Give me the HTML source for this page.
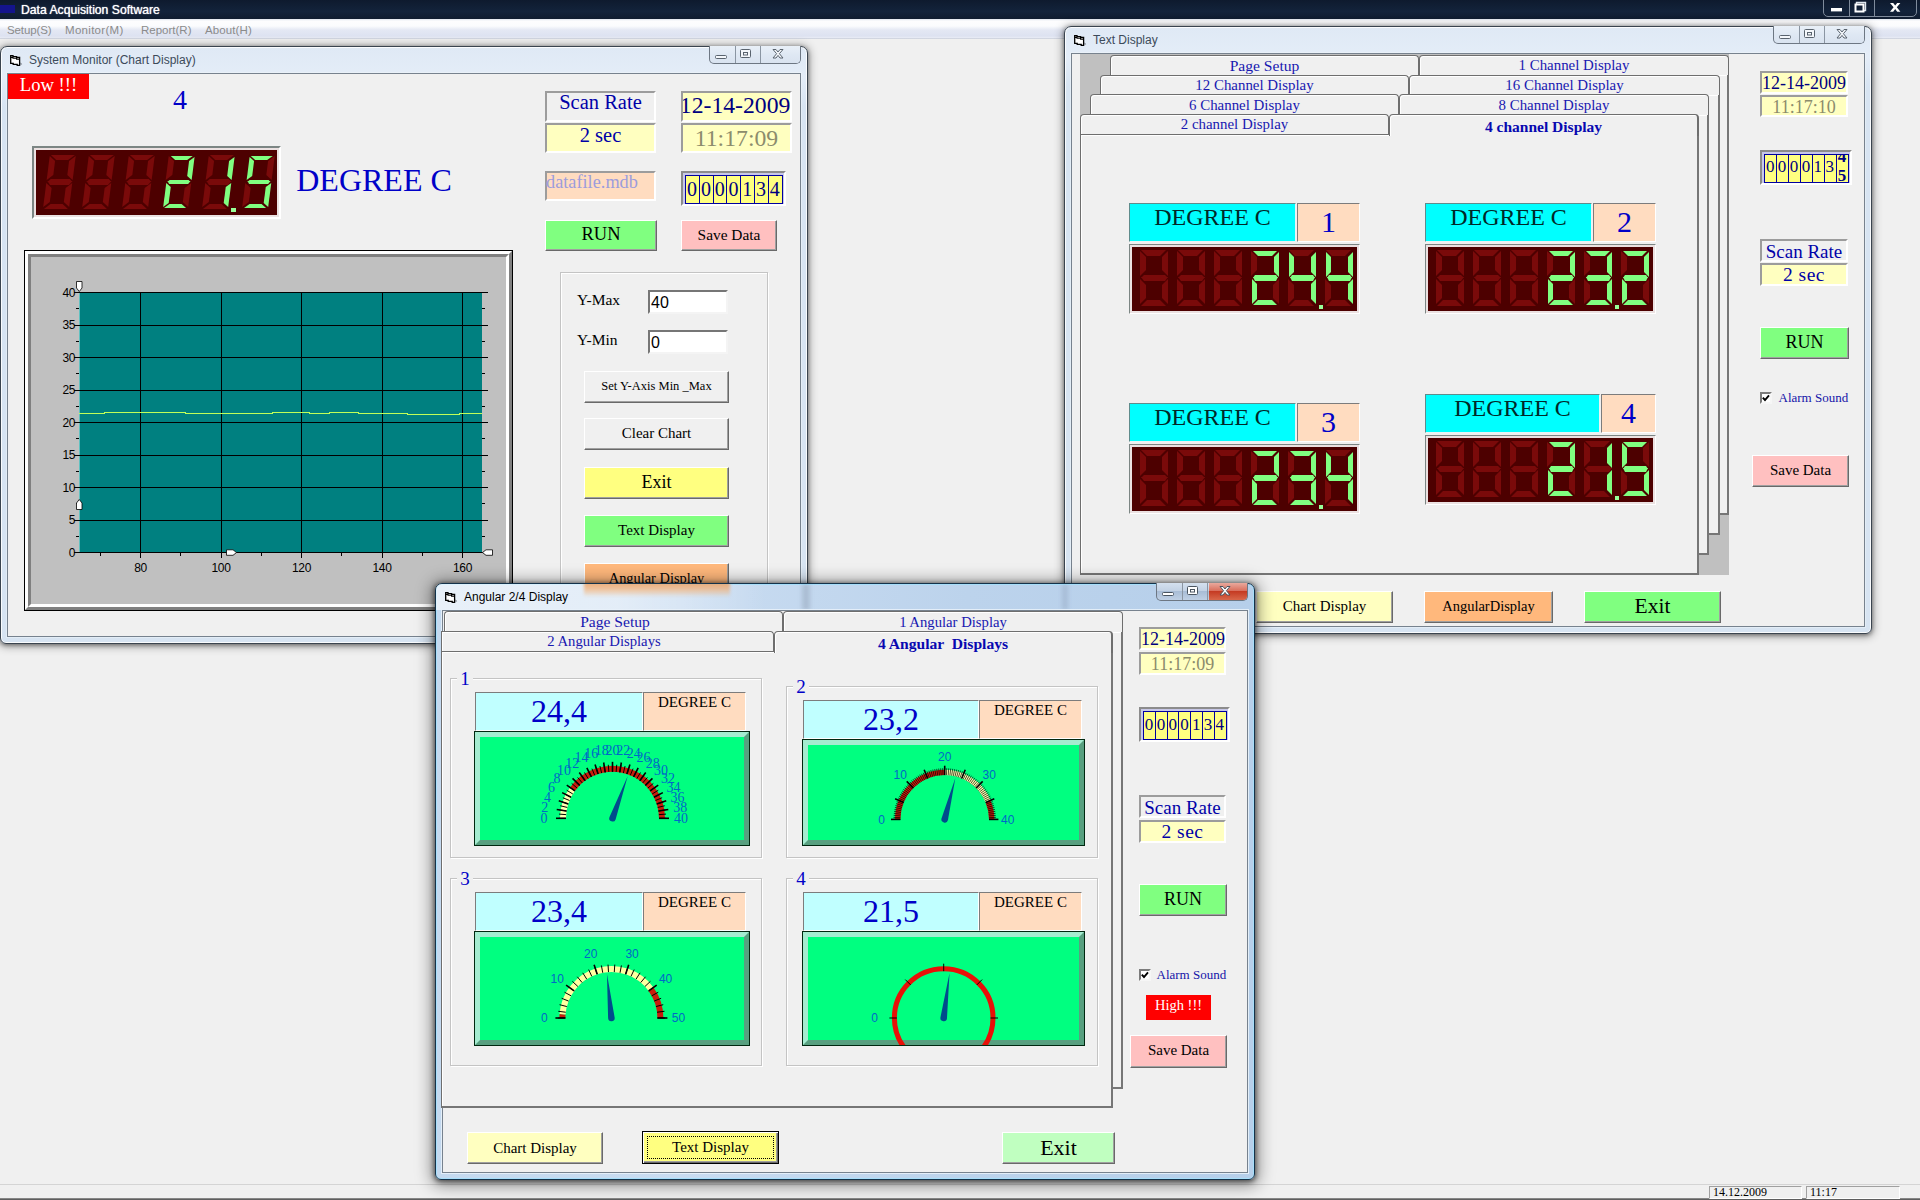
<!DOCTYPE html>
<html lang="en"><head><meta charset="utf-8"><title>Data Acquisition Software</title>
<style>
html,body{margin:0;padding:0}
body{width:1920px;height:1200px;overflow:hidden;background:#f0f0f0;position:relative;font-family:"Liberation Sans",sans-serif}
div,svg,i{position:absolute;box-sizing:border-box}
i{display:block;width:0;height:0;box-sizing:content-box}
.f-s{font-family:"Liberation Serif",serif}
.f-a{font-family:"Liberation Sans",sans-serif}
.tc{text-align:center;white-space:nowrap}
.tl{text-align:left;white-space:nowrap}
.tr{text-align:right;white-space:nowrap}
.dg{overflow:visible}
.win{overflow:hidden}
</style></head>
<body>
<div style="left:0px;top:0px;width:1920px;height:19px;background:linear-gradient(180deg,#0e1a2e 0,#13233b 60%,#0f1c30 100%);"></div>
<div style="left:0px;top:5px;width:15px;height:8px;background:#14148c;"></div>
<div class="f-a tl" style="left:21px;top:1px;width:379px;height:19px;font-size:12.2px;color:#fff;line-height:19px;text-shadow:0 0 1px #fff;">Data Acquisition Software</div>
<div style="left:1823px;top:-1px;width:94px;height:18px;border:1px solid #7f8b9c;border-radius:0 0 5px 5px;"><div style="left:25px;top:0;width:1px;height:16px;background:#7f8b9c"></div><div style="left:50px;top:0;width:1px;height:16px;background:#7f8b9c"></div><svg width="94" height="17" viewBox="0 0 94 17" style="left:-1px;top:0"><rect x="8" y="8" width="11" height="3.4" fill="#fff"/><path d="M33.5 4.5v-2h9v8h-2" fill="none" stroke="#dfe6ee" stroke-width="1.4"/><rect x="32.5" y="4.5" width="8" height="7" fill="none" stroke="#fff" stroke-width="2"/><path d="M67 3h3.2l2 2.6 2-2.6h3.2l-3.6 4.3 3.6 4.4h-3.2l-2-2.7-2 2.7h-3.2l3.6-4.4z" fill="#fff"/></svg></div>
<div style="left:0px;top:19px;width:1920px;height:20px;background:linear-gradient(180deg,#dfe5ee 0,#fdfdfe 2px,#fbfcfe 7px,#e4e8f4 11px,#dde2f1 17px,#e9ecf5 19px,#b9bfcc 20px);"></div>
<div class="f-a tl" style="left:7px;top:21px;width:80px;height:18px;font-size:11.5px;color:#8b8b8b;line-height:18px;letter-spacing:-0.1px;">Setup(S)</div>
<div class="f-a tl" style="left:65px;top:21px;width:80px;height:18px;font-size:11.5px;color:#8b8b8b;line-height:18px;letter-spacing:0.3px;">Monitor(M)</div>
<div class="f-a tl" style="left:141px;top:21px;width:80px;height:18px;font-size:11.5px;color:#8b8b8b;line-height:18px;letter-spacing:0px;">Report(R)</div>
<div class="f-a tl" style="left:205px;top:21px;width:80px;height:18px;font-size:11.5px;color:#8b8b8b;line-height:18px;letter-spacing:0.1px;">About(H)</div>
<div style="left:0px;top:1184px;width:1920px;height:16px;background:#f0f0f0;border-top:1px solid #d4d4d4;"></div>
<div style="left:0px;top:1198px;width:1920px;height:2px;background:linear-gradient(180deg,#9a9a9a,#4a4a4a);"></div>
<div style="left:1709px;top:1186px;width:93px;height:13px;border:1px solid;border-color:#a0a0a0 #fff #fff #a0a0a0;"></div>
<div style="left:1806px;top:1186px;width:94px;height:13px;border:1px solid;border-color:#a0a0a0 #fff #fff #a0a0a0;"></div>
<div class="f-s tl" style="left:1713px;top:1185px;width:87px;height:14px;font-size:12px;color:#000;line-height:14px;">14.12.2009</div>
<div class="f-s tl" style="left:1810px;top:1185px;width:88px;height:14px;font-size:12px;color:#000;line-height:14px;">11:17</div>
<div class="win" style="left:0px;top:46px;width:808px;height:598px;background:linear-gradient(180deg,#dfe9f5 0px,#e4edf8 30px,#d7e4f2 60px,#d7e4f2 100%);border:1px solid #3a444f;border-radius:7px 7px 6px 6px;box-shadow:0 1px 4px 0 rgba(0,0,0,.45),0 1px 9px 2px rgba(0,0,0,.3), inset 0 0 0 1px rgba(255,255,255,.85);"></div>
<svg class="ico" width="13" height="12" viewBox="0 0 13 12" style="left:10px;top:55px"><path d="M.7.7H3v.9h3.6v.9h3v7.8H7.2v-.9h-4v-1H.7z" fill="#fff" stroke="#000" stroke-width="1.3"/><path d="M.7 2.4H3v.9h3.6v.9h3" fill="none" stroke="#000" stroke-width="1.1"/><path d="M10.3 7.2l1.9 2-1.9.5z" fill="#6a7078"/></svg>
<div class="f-a tl" style="left:29px;top:49px;width:371px;height:22px;font-size:12px;color:#3c4a5a;line-height:22px;">System Monitor (Chart Display)</div>
<div class="client" style="left:7px;top:73px;width:794px;height:564px;background:#f0f0f0;border:1px solid #77828e;box-shadow:0 0 0 1px rgba(240,245,250,.5);"></div>
<div class="capb" style="left:709px;top:46px;width:92px;height:18px;border:1px solid #6d7783;border-top:none;border-radius:0 0 5px 5px;background:linear-gradient(180deg,#e9f0f8 0,#dfe8f3 50%,#d9e3f0 100%);overflow:hidden;"><div style="left:0;top:0;width:26px;height:17px;border-right:1px solid #8a95a2"></div><div style="left:27px;top:0;width:24px;height:17px;border-right:1px solid #8a95a2"></div><div style="left:52px;top:0;width:39px;height:17px;background:linear-gradient(180deg,#e9f0f8 0,#dfe8f3 50%,#d9e3f0 100%)"></div><svg width="92" height="17" viewBox="0 0 92 17" style="left:-4px;top:-1px"><rect x="9.5" y="10.5" width="11" height="3" rx="1" fill="#f4f7fb" stroke="#59636e"/><rect x="34.5" y="4.5" width="10" height="8" rx="1" fill="#f4f7fb" stroke="#59636e"/><rect x="37.5" y="7.5" width="4" height="2.5" fill="none" stroke="#59636e"/><path d="M67 4.5h3l2 2.5 2-2.5h3l-3.6 4.2 3.6 4.3h-3l-2-2.6-2 2.6h-3l3.6-4.3z" fill="#f4f7fb" stroke="#59636e" stroke-width="1"/></svg></div>
<div class="f-s tc" style="left:8px;top:74px;width:81px;height:24.5px;font-size:18.6px;color:#fff;line-height:24.5px;background:#ff0000;line-height:21px;">Low !!!</div>
<div class="f-s tc" style="left:160px;top:84px;width:40px;height:32px;font-size:28px;color:#0000c8;line-height:32px;">4</div>
<div class="led" aria-label="21.5" style="left:32px;top:146px;width:249px;height:73px;border:2px solid;border-color:#7c8684 #fff #fff #7c8684;"><div style="left:0;top:0;right:0;bottom:0;background:#4d0000;border:2px solid #ebe1e1;overflow:hidden;"><div class="dg" style="left:7.5px;top:5.7px;width:25.5px;height:52.5px;transform:skewX(-7.3deg);transform-origin:0 100%;"><i style="left:0.45px;top:-0.6px;width:11.2px;border-top:5.6px solid #7a0a0a;border-left:6.7px solid transparent;border-right:6.7px solid transparent;"></i><i style="left:0.45px;top:47.5px;width:11.2px;border-bottom:5.6px solid #7a0a0a;border-left:6.7px solid transparent;border-right:6.7px solid transparent;"></i><i style="left:0.45px;top:23.25px;width:18.6px;border-bottom:3px solid #7a0a0a;border-left:3px solid transparent;border-right:3px solid transparent;"></i><i style="left:0.45px;top:25.25px;width:18.6px;border-top:4px solid #7a0a0a;border-left:3px solid transparent;border-right:3px solid transparent;"></i><i style="left:-0.6px;top:0.45px;height:13.55px;border-left:6.7px solid #7a0a0a;border-top:5.6px solid transparent;border-bottom:5.6px solid transparent;"></i><i style="left:19.4px;top:0.45px;height:13.55px;border-right:6.7px solid #7a0a0a;border-top:5.6px solid transparent;border-bottom:5.6px solid transparent;"></i><i style="left:-0.6px;top:27.3px;height:13.55px;border-left:6.7px solid #7a0a0a;border-top:5.6px solid transparent;border-bottom:5.6px solid transparent;"></i><i style="left:19.4px;top:27.3px;height:13.55px;border-right:6.7px solid #7a0a0a;border-top:5.6px solid transparent;border-bottom:5.6px solid transparent;"></i></div><div class="dg" style="left:47.3px;top:5.7px;width:25.5px;height:52.5px;transform:skewX(-7.3deg);transform-origin:0 100%;"><i style="left:0.45px;top:-0.6px;width:11.2px;border-top:5.6px solid #7a0a0a;border-left:6.7px solid transparent;border-right:6.7px solid transparent;"></i><i style="left:0.45px;top:47.5px;width:11.2px;border-bottom:5.6px solid #7a0a0a;border-left:6.7px solid transparent;border-right:6.7px solid transparent;"></i><i style="left:0.45px;top:23.25px;width:18.6px;border-bottom:3px solid #7a0a0a;border-left:3px solid transparent;border-right:3px solid transparent;"></i><i style="left:0.45px;top:25.25px;width:18.6px;border-top:4px solid #7a0a0a;border-left:3px solid transparent;border-right:3px solid transparent;"></i><i style="left:-0.6px;top:0.45px;height:13.55px;border-left:6.7px solid #7a0a0a;border-top:5.6px solid transparent;border-bottom:5.6px solid transparent;"></i><i style="left:19.4px;top:0.45px;height:13.55px;border-right:6.7px solid #7a0a0a;border-top:5.6px solid transparent;border-bottom:5.6px solid transparent;"></i><i style="left:-0.6px;top:27.3px;height:13.55px;border-left:6.7px solid #7a0a0a;border-top:5.6px solid transparent;border-bottom:5.6px solid transparent;"></i><i style="left:19.4px;top:27.3px;height:13.55px;border-right:6.7px solid #7a0a0a;border-top:5.6px solid transparent;border-bottom:5.6px solid transparent;"></i></div><div class="dg" style="left:87.1px;top:5.7px;width:25.5px;height:52.5px;transform:skewX(-7.3deg);transform-origin:0 100%;"><i style="left:0.45px;top:-0.6px;width:11.2px;border-top:5.6px solid #7a0a0a;border-left:6.7px solid transparent;border-right:6.7px solid transparent;"></i><i style="left:0.45px;top:47.5px;width:11.2px;border-bottom:5.6px solid #7a0a0a;border-left:6.7px solid transparent;border-right:6.7px solid transparent;"></i><i style="left:0.45px;top:23.25px;width:18.6px;border-bottom:3px solid #7a0a0a;border-left:3px solid transparent;border-right:3px solid transparent;"></i><i style="left:0.45px;top:25.25px;width:18.6px;border-top:4px solid #7a0a0a;border-left:3px solid transparent;border-right:3px solid transparent;"></i><i style="left:-0.6px;top:0.45px;height:13.55px;border-left:6.7px solid #7a0a0a;border-top:5.6px solid transparent;border-bottom:5.6px solid transparent;"></i><i style="left:19.4px;top:0.45px;height:13.55px;border-right:6.7px solid #7a0a0a;border-top:5.6px solid transparent;border-bottom:5.6px solid transparent;"></i><i style="left:-0.6px;top:27.3px;height:13.55px;border-left:6.7px solid #7a0a0a;border-top:5.6px solid transparent;border-bottom:5.6px solid transparent;"></i><i style="left:19.4px;top:27.3px;height:13.55px;border-right:6.7px solid #7a0a0a;border-top:5.6px solid transparent;border-bottom:5.6px solid transparent;"></i></div><div class="dg" style="left:126.9px;top:5.7px;width:25.5px;height:52.5px;transform:skewX(-7.3deg);transform-origin:0 100%;"><i style="left:-0.6px;top:0.45px;height:13.55px;border-left:6.7px solid #7a0a0a;border-top:5.6px solid transparent;border-bottom:5.6px solid transparent;"></i><i style="left:19.4px;top:27.3px;height:13.55px;border-right:6.7px solid #7a0a0a;border-top:5.6px solid transparent;border-bottom:5.6px solid transparent;"></i><i style="left:1.05px;top:0px;width:12.4px;border-top:4.4px solid #80ff80;border-left:5.5px solid transparent;border-right:5.5px solid transparent;"></i><i style="left:1.05px;top:48.1px;width:12.4px;border-bottom:4.4px solid #80ff80;border-left:5.5px solid transparent;border-right:5.5px solid transparent;"></i><i style="left:1.05px;top:24.25px;width:19.4px;border-bottom:2px solid #80ff80;border-left:2px solid transparent;border-right:2px solid transparent;"></i><i style="left:1.05px;top:25.25px;width:19.4px;border-top:3px solid #80ff80;border-left:2px solid transparent;border-right:2px solid transparent;"></i><i style="left:20px;top:1.05px;height:15.35px;border-right:5.5px solid #80ff80;border-top:4.4px solid transparent;border-bottom:4.4px solid transparent;"></i><i style="left:0px;top:27.3px;height:15.35px;border-left:5.5px solid #80ff80;border-top:4.4px solid transparent;border-bottom:4.4px solid transparent;"></i></div><div class="dg" style="left:166.7px;top:5.7px;width:25.5px;height:52.5px;transform:skewX(-7.3deg);transform-origin:0 100%;"><i style="left:0.45px;top:-0.6px;width:11.2px;border-top:5.6px solid #7a0a0a;border-left:6.7px solid transparent;border-right:6.7px solid transparent;"></i><i style="left:0.45px;top:47.5px;width:11.2px;border-bottom:5.6px solid #7a0a0a;border-left:6.7px solid transparent;border-right:6.7px solid transparent;"></i><i style="left:0.45px;top:23.25px;width:18.6px;border-bottom:3px solid #7a0a0a;border-left:3px solid transparent;border-right:3px solid transparent;"></i><i style="left:0.45px;top:25.25px;width:18.6px;border-top:4px solid #7a0a0a;border-left:3px solid transparent;border-right:3px solid transparent;"></i><i style="left:-0.6px;top:0.45px;height:13.55px;border-left:6.7px solid #7a0a0a;border-top:5.6px solid transparent;border-bottom:5.6px solid transparent;"></i><i style="left:-0.6px;top:27.3px;height:13.55px;border-left:6.7px solid #7a0a0a;border-top:5.6px solid transparent;border-bottom:5.6px solid transparent;"></i><i style="left:20px;top:1.05px;height:15.35px;border-right:5.5px solid #80ff80;border-top:4.4px solid transparent;border-bottom:4.4px solid transparent;"></i><i style="left:20px;top:27.3px;height:15.35px;border-right:5.5px solid #80ff80;border-top:4.4px solid transparent;border-bottom:4.4px solid transparent;"></i></div><div class="dg" style="left:206.5px;top:5.7px;width:25.5px;height:52.5px;transform:skewX(-7.3deg);transform-origin:0 100%;"><i style="left:19.4px;top:0.45px;height:13.55px;border-right:6.7px solid #7a0a0a;border-top:5.6px solid transparent;border-bottom:5.6px solid transparent;"></i><i style="left:-0.6px;top:27.3px;height:13.55px;border-left:6.7px solid #7a0a0a;border-top:5.6px solid transparent;border-bottom:5.6px solid transparent;"></i><i style="left:1.05px;top:0px;width:12.4px;border-top:4.4px solid #80ff80;border-left:5.5px solid transparent;border-right:5.5px solid transparent;"></i><i style="left:1.05px;top:48.1px;width:12.4px;border-bottom:4.4px solid #80ff80;border-left:5.5px solid transparent;border-right:5.5px solid transparent;"></i><i style="left:1.05px;top:24.25px;width:19.4px;border-bottom:2px solid #80ff80;border-left:2px solid transparent;border-right:2px solid transparent;"></i><i style="left:1.05px;top:25.25px;width:19.4px;border-top:3px solid #80ff80;border-left:2px solid transparent;border-right:2px solid transparent;"></i><i style="left:0px;top:1.05px;height:15.35px;border-left:5.5px solid #80ff80;border-top:4.4px solid transparent;border-bottom:4.4px solid transparent;"></i><i style="left:20px;top:27.3px;height:15.35px;border-right:5.5px solid #80ff80;border-top:4.4px solid transparent;border-bottom:4.4px solid transparent;"></i></div><div style="left:195.05px;top:57.7px;width:4.6px;height:4px;background:#98ff98"></div></div></div>
<div class="f-s tc" style="left:288px;top:160px;width:172px;height:40px;font-size:32px;color:#0000c8;line-height:40px;">DEGREE C</div>
<div class="f-s tc" style="left:545px;top:91px;width:111px;height:31px;background:#f0f0f0;border:2px solid;border-color:#9c9c9c #fff #fff #9c9c9c;font-size:20.5px;color:#0000a8;line-height:27px;"><span style="position:relative;top:-4px">Scan Rate</span></div>
<div class="f-s tc" style="left:545px;top:123px;width:111px;height:30px;background:#ffffc0;border:2px solid;border-color:#9c9c9c #fff #fff #9c9c9c;font-size:20.5px;color:#0000a8;line-height:26px;"><span style="position:relative;top:-3px">2 sec</span></div>
<div class="f-s tl" style="left:681px;top:91px;width:111px;height:31px;background:#ffffc0;border:2px solid;border-color:#9c9c9c #fff #fff #9c9c9c;font-size:23.7px;color:#000080;line-height:27px;overflow:hidden;text-indent:-3.2px;"><span style="position:relative;top:-1px">12-14-2009</span></div>
<div class="f-s tc" style="left:681px;top:123px;width:111px;height:30px;background:#ffffc0;border:2px solid;border-color:#9c9c9c #fff #fff #9c9c9c;font-size:23.7px;color:#8c8c6c;line-height:26px;">11:17:09</div>
<div class="f-s tl" style="left:545px;top:171px;width:111px;height:30px;background:#ffdcc0;border:2px solid;border-color:#9c9c9c #fff #fff #9c9c9c;font-size:18.3px;color:#9c9cdc;line-height:26px;text-indent:-1px;"><span style="position:relative;top:-4px">datafile.mdb</span></div>
<div style="left:681px;top:171px;width:105px;height:35px;background:#c8c8e8;border:2px solid;border-color:#8c8c8c #fff #fff #8c8c8c;"></div>
<div style="left:685px;top:174.5px;width:97.5px;height:29.5px;background:#ffff80;border:1px solid #0000a0;"></div>
<div class="f-s tc" style="left:684.7px;top:174.5px;width:14.79px;height:29.5px;font-size:20px;color:#000080;line-height:29.5px;">0</div>
<div style="left:698.79px;top:174.5px;width:1px;height:29.5px;background:#0000a0;"></div>
<div class="f-s tc" style="left:698.49px;top:174.5px;width:14.79px;height:29.5px;font-size:20px;color:#000080;line-height:29.5px;">0</div>
<div style="left:712.57px;top:174.5px;width:1px;height:29.5px;background:#0000a0;"></div>
<div class="f-s tc" style="left:712.27px;top:174.5px;width:14.79px;height:29.5px;font-size:20px;color:#000080;line-height:29.5px;">0</div>
<div style="left:726.36px;top:174.5px;width:1px;height:29.5px;background:#0000a0;"></div>
<div class="f-s tc" style="left:726.06px;top:174.5px;width:14.79px;height:29.5px;font-size:20px;color:#000080;line-height:29.5px;">0</div>
<div style="left:740.14px;top:174.5px;width:1px;height:29.5px;background:#0000a0;"></div>
<div class="f-s tc" style="left:739.84px;top:174.5px;width:14.79px;height:29.5px;font-size:20px;color:#000080;line-height:29.5px;">1</div>
<div style="left:753.93px;top:174.5px;width:1px;height:29.5px;background:#0000a0;"></div>
<div class="f-s tc" style="left:753.63px;top:174.5px;width:14.79px;height:29.5px;font-size:20px;color:#000080;line-height:29.5px;">3</div>
<div style="left:767.71px;top:174.5px;width:1px;height:29.5px;background:#0000a0;"></div>
<div class="f-s tc" style="left:767.41px;top:174.5px;width:14.79px;height:29.5px;font-size:20px;color:#000080;line-height:29.5px;">4</div>
<div class="f-s tc" style="left:545px;top:220px;width:112px;height:31px;background:#80ff80;border-style:solid;border-width:1px;border-color:#fff #696969 #696969 #fff;box-shadow:inset -1px -1px 0 #a0a0a0;font-size:18.5px;color:#000;line-height:29px;"><span style="position:relative;top:-0.7px">RUN</span></div>
<div class="f-s tc" style="left:681px;top:220px;width:96px;height:31px;background:#ffc0c0;border-style:solid;border-width:1px;border-color:#fff #696969 #696969 #fff;box-shadow:inset -1px -1px 0 #a0a0a0;font-size:15.4px;color:#000;line-height:29px;"><span style="position:relative;top:-0.7px">Save Data</span></div>
<div style="left:24px;top:250px;width:489px;height:361px;border:1px solid #000;background:#c0c0c0;"><div style="left:0;top:0;right:0;bottom:0;border:3px solid;border-color:#fff #808080 #808080 #fff"></div><div style="left:3px;top:3px;right:3px;bottom:3px;border:3px solid;border-color:#808080 #fff #fff #808080"></div></div>
<svg width="489" height="361" viewBox="24 250 489 361" style="left:24px;top:250px" shape-rendering="crispEdges"><rect x="79" y="292.5" width="403" height="260.0" fill="#008080"/><rect x="78.5" y="292.5" width="1" height="260.0" fill="#60c0c0"/><line x1="74" y1="292.5" x2="488" y2="292.5" stroke="#000" stroke-width="1"/><line x1="76" y1="308.75" x2="79" y2="308.75" stroke="#000"/><line x1="482" y1="308.75" x2="485" y2="308.75" stroke="#000"/><line x1="74" y1="325.0" x2="488" y2="325.0" stroke="#000" stroke-width="1"/><line x1="76" y1="341.25" x2="79" y2="341.25" stroke="#000"/><line x1="482" y1="341.25" x2="485" y2="341.25" stroke="#000"/><line x1="74" y1="357.5" x2="488" y2="357.5" stroke="#000" stroke-width="1"/><line x1="76" y1="373.75" x2="79" y2="373.75" stroke="#000"/><line x1="482" y1="373.75" x2="485" y2="373.75" stroke="#000"/><line x1="74" y1="390.0" x2="488" y2="390.0" stroke="#000" stroke-width="1"/><line x1="76" y1="406.25" x2="79" y2="406.25" stroke="#000"/><line x1="482" y1="406.25" x2="485" y2="406.25" stroke="#000"/><line x1="74" y1="422.5" x2="488" y2="422.5" stroke="#000" stroke-width="1"/><line x1="76" y1="438.75" x2="79" y2="438.75" stroke="#000"/><line x1="482" y1="438.75" x2="485" y2="438.75" stroke="#000"/><line x1="74" y1="455.0" x2="488" y2="455.0" stroke="#000" stroke-width="1"/><line x1="76" y1="471.25" x2="79" y2="471.25" stroke="#000"/><line x1="482" y1="471.25" x2="485" y2="471.25" stroke="#000"/><line x1="74" y1="487.5" x2="488" y2="487.5" stroke="#000" stroke-width="1"/><line x1="76" y1="503.75" x2="79" y2="503.75" stroke="#000"/><line x1="482" y1="503.75" x2="485" y2="503.75" stroke="#000"/><line x1="74" y1="520.0" x2="488" y2="520.0" stroke="#000" stroke-width="1"/><line x1="76" y1="536.25" x2="79" y2="536.25" stroke="#000"/><line x1="482" y1="536.25" x2="485" y2="536.25" stroke="#000"/><line x1="74" y1="552.5" x2="488" y2="552.5" stroke="#000" stroke-width="1"/><line x1="140.5" y1="292.5" x2="140.5" y2="557.5" stroke="#000"/><line x1="100.25" y1="552.5" x2="100.25" y2="555.5" stroke="#000"/><line x1="221.0" y1="292.5" x2="221.0" y2="557.5" stroke="#000"/><line x1="180.75" y1="552.5" x2="180.75" y2="555.5" stroke="#000"/><line x1="301.5" y1="292.5" x2="301.5" y2="557.5" stroke="#000"/><line x1="261.25" y1="552.5" x2="261.25" y2="555.5" stroke="#000"/><line x1="382.0" y1="292.5" x2="382.0" y2="557.5" stroke="#000"/><line x1="341.75" y1="552.5" x2="341.75" y2="555.5" stroke="#000"/><line x1="462.5" y1="292.5" x2="462.5" y2="557.5" stroke="#000"/><line x1="422.25" y1="552.5" x2="422.25" y2="555.5" stroke="#000"/><polyline fill="none" stroke="#c0ff58" stroke-width="1.1" points="79,413.5 104,413.5 105,412.7 185,412.7 186,413.5 272,413.5 273,412.7 309,412.7 310,413.5 329,413.5 330,412.7 358,412.7 359,413.5 407,413.5 408,414.3 459,414.3 460,413.5 482,413.5"/><g shape-rendering="auto" font-family="'Liberation Sans',sans-serif" font-size="12" fill="#000" letter-spacing="-0.4"><text x="75" y="296.8" text-anchor="end">40</text><text x="75" y="329.3" text-anchor="end">35</text><text x="75" y="361.8" text-anchor="end">30</text><text x="75" y="394.3" text-anchor="end">25</text><text x="75" y="426.8" text-anchor="end">20</text><text x="75" y="459.3" text-anchor="end">15</text><text x="75" y="491.8" text-anchor="end">10</text><text x="75" y="524.3" text-anchor="end">5</text><text x="75" y="556.8" text-anchor="end">0</text><text x="140.5" y="572.3" text-anchor="middle">80</text><text x="221.0" y="572.3" text-anchor="middle">100</text><text x="301.5" y="572.3" text-anchor="middle">120</text><text x="382.0" y="572.3" text-anchor="middle">140</text><text x="462.5" y="572.3" text-anchor="middle">160</text><path d="M76.5 281.5h5.5v6.5l-2.75 3.5-2.75-3.5z" fill="#fff" stroke="#000" stroke-width=".8"/><path d="M76.5 509.5h5.5v-6.5l-2.75-3.5-2.75 3.5z" fill="#fff" stroke="#000" stroke-width=".8"/><path d="M226.5 549.8v5.5h6.5l3.5-2.75-3.5-2.75z" fill="#fff" stroke="#000" stroke-width=".8"/><path d="M492.5 549.8v5.5h-6.5l-3.5-2.75 3.5-2.75z" fill="#fff" stroke="#000" stroke-width=".8"/></g></svg>
<div style="left:560px;top:272px;width:208px;height:353px;border:1px solid #d5d5d5;box-shadow:1px 1px 0 #fff, inset 1px 1px 0 #fff;border-color:#c4c4c4;"></div>
<div class="f-s tl" style="left:577px;top:288px;width:63px;height:24px;font-size:15.5px;color:#000;line-height:24px;">Y-Max</div>
<div class="f-s tl" style="left:577px;top:328px;width:63px;height:24px;font-size:15.5px;color:#000;line-height:24px;">Y-Min</div>
<div class="f-a tl" style="left:648px;top:290px;width:80px;height:24px;background:#fff;border:2px solid;border-color:#767676 #f4f4f4 #f4f4f4 #767676;font-size:16px;line-height:22px;padding-left:1px;">40</div>
<div class="f-a tl" style="left:648px;top:330px;width:80px;height:24px;background:#fff;border:2px solid;border-color:#767676 #f4f4f4 #f4f4f4 #767676;font-size:16px;line-height:22px;padding-left:1px;">0</div>
<div class="f-s tc" style="left:584px;top:371px;width:145px;height:32px;background:#f0f0f0;border-style:solid;border-width:1px;border-color:#fff #696969 #696969 #fff;box-shadow:inset -1px -1px 0 #a0a0a0;font-size:12.5px;color:#000;line-height:30px;"><span style="position:relative;top:-0.7px">Set Y-Axis Min _Max</span></div>
<div class="f-s tc" style="left:584px;top:418px;width:145px;height:32px;background:#f0f0f0;border-style:solid;border-width:1px;border-color:#fff #696969 #696969 #fff;box-shadow:inset -1px -1px 0 #a0a0a0;font-size:15px;color:#000;line-height:30px;"><span style="position:relative;top:-0.7px">Clear Chart</span></div>
<div class="f-s tc" style="left:584px;top:467px;width:145px;height:32px;background:#ffff80;border-style:solid;border-width:1px;border-color:#fff #696969 #696969 #fff;box-shadow:inset -1px -1px 0 #a0a0a0;font-size:18px;color:#000;line-height:30px;"><span style="position:relative;top:-0.7px">Exit</span></div>
<div class="f-s tc" style="left:584px;top:515px;width:145px;height:32px;background:#80ff80;border-style:solid;border-width:1px;border-color:#fff #696969 #696969 #fff;box-shadow:inset -1px -1px 0 #a0a0a0;font-size:15px;color:#000;line-height:30px;"><span style="position:relative;top:-0.7px">Text Display</span></div>
<div class="f-s tc" style="left:584px;top:563px;width:145px;height:32px;background:#ffb87c;border-style:solid;border-width:1px;border-color:#fff #696969 #696969 #fff;box-shadow:inset -1px -1px 0 #a0a0a0;font-size:14.4px;color:#000;line-height:30px;"><span style="position:relative;top:-0.7px">Angular Display</span></div>
<div class="win" style="left:1064px;top:26px;width:808px;height:608px;background:linear-gradient(180deg,#dfe9f5 0px,#e4edf8 30px,#d7e4f2 60px,#d7e4f2 100%);border:1px solid #3a444f;border-radius:7px 7px 6px 6px;box-shadow:0 1px 4px 0 rgba(0,0,0,.45),0 1px 9px 2px rgba(0,0,0,.3), inset 0 0 0 1px rgba(255,255,255,.85);"></div>
<svg class="ico" width="13" height="12" viewBox="0 0 13 12" style="left:1074px;top:35px"><path d="M.7.7H3v.9h3.6v.9h3v7.8H7.2v-.9h-4v-1H.7z" fill="#fff" stroke="#000" stroke-width="1.3"/><path d="M.7 2.4H3v.9h3.6v.9h3" fill="none" stroke="#000" stroke-width="1.1"/><path d="M10.3 7.2l1.9 2-1.9.5z" fill="#6a7078"/></svg>
<div class="f-a tl" style="left:1093px;top:29px;width:371px;height:22px;font-size:12px;color:#3c4a5a;line-height:22px;">Text Display</div>
<div class="client" style="left:1071px;top:53px;width:794px;height:574px;background:#f0f0f0;border:1px solid #77828e;box-shadow:0 0 0 1px rgba(240,245,250,.5);"></div>
<div class="capb" style="left:1773px;top:26px;width:92px;height:18px;border:1px solid #6d7783;border-top:none;border-radius:0 0 5px 5px;background:linear-gradient(180deg,#e9f0f8 0,#dfe8f3 50%,#d9e3f0 100%);overflow:hidden;"><div style="left:0;top:0;width:26px;height:17px;border-right:1px solid #8a95a2"></div><div style="left:27px;top:0;width:24px;height:17px;border-right:1px solid #8a95a2"></div><div style="left:52px;top:0;width:39px;height:17px;background:linear-gradient(180deg,#e9f0f8 0,#dfe8f3 50%,#d9e3f0 100%)"></div><svg width="92" height="17" viewBox="0 0 92 17" style="left:-4px;top:-1px"><rect x="9.5" y="10.5" width="11" height="3" rx="1" fill="#f4f7fb" stroke="#59636e"/><rect x="34.5" y="4.5" width="10" height="8" rx="1" fill="#f4f7fb" stroke="#59636e"/><rect x="37.5" y="7.5" width="4" height="2.5" fill="none" stroke="#59636e"/><path d="M67 4.5h3l2 2.5 2-2.5h3l-3.6 4.2 3.6 4.3h-3l-2-2.6-2 2.6h-3l3.6-4.3z" fill="#f4f7fb" stroke="#59636e" stroke-width="1"/></svg></div>
<div style="left:1080px;top:54px;width:649px;height:521px;background:#c0c0c0;"></div>
<div style="left:1110px;top:74px;width:619px;height:441px;background:#f0f0f0;border:1px solid;border-color:#6e6e6e #767676 #767676 #6e6e6e;border-width:1px 2px 2px 1px;box-shadow:inset 1px 1px 0 #fff;"></div>
<div class="f-s tc" style="left:1110px;top:55px;width:309px;height:20px;background:#f0f0f0;border:1px solid #6e6e6e;border-bottom:none;border-radius:4px 4px 0 0;box-shadow:inset 1px 1px 0 #fff;font-size:15.6px;color:#1818b0;line-height:19px;">Page Setup</div>
<div class="f-s tc" style="left:1419px;top:55px;width:310px;height:20px;background:#f0f0f0;border:1px solid #6e6e6e;border-bottom:none;border-radius:4px 4px 0 0;box-shadow:inset 1px 1px 0 #fff;font-size:14.9px;color:#1818b0;line-height:19px;">1 Channel Display</div>
<div style="left:1100px;top:94px;width:620px;height:441px;background:#f0f0f0;border:1px solid;border-color:#6e6e6e #767676 #767676 #6e6e6e;border-width:1px 2px 2px 1px;box-shadow:inset 1px 1px 0 #fff;"></div>
<div class="f-s tc" style="left:1100px;top:75px;width:309px;height:20px;background:#f0f0f0;border:1px solid #6e6e6e;border-bottom:none;border-radius:4px 4px 0 0;box-shadow:inset 1px 1px 0 #fff;font-size:14.9px;color:#1818b0;line-height:19px;">12 Channel Display</div>
<div class="f-s tc" style="left:1409px;top:75px;width:311px;height:20px;background:#f0f0f0;border:1px solid #6e6e6e;border-bottom:none;border-radius:4px 4px 0 0;box-shadow:inset 1px 1px 0 #fff;font-size:14.9px;color:#1818b0;line-height:19px;">16 Channel Display</div>
<div style="left:1090px;top:114px;width:619px;height:441px;background:#f0f0f0;border:1px solid;border-color:#6e6e6e #767676 #767676 #6e6e6e;border-width:1px 2px 2px 1px;box-shadow:inset 1px 1px 0 #fff;"></div>
<div class="f-s tc" style="left:1090px;top:94px;width:309px;height:21px;background:#f0f0f0;border:1px solid #6e6e6e;border-bottom:none;border-radius:4px 4px 0 0;box-shadow:inset 1px 1px 0 #fff;font-size:14.9px;color:#1818b0;line-height:20px;">6 Channel Display</div>
<div class="f-s tc" style="left:1399px;top:94px;width:310px;height:21px;background:#f0f0f0;border:1px solid #6e6e6e;border-bottom:none;border-radius:4px 4px 0 0;box-shadow:inset 1px 1px 0 #fff;font-size:14.9px;color:#1818b0;line-height:20px;">8 Channel Display</div>
<div style="left:1080px;top:134px;width:619px;height:441px;background:#f0f0f0;border:1px solid;border-color:#6e6e6e #767676 #767676 #6e6e6e;border-width:1px 2px 2px 1px;box-shadow:inset 1px 1px 0 #fff;"></div>
<div class="f-s tc" style="left:1080px;top:114px;width:309px;height:20px;background:#f0f0f0;border:1px solid #6e6e6e;border-bottom:none;border-radius:4px 4px 0 0;box-shadow:inset 1px 1px 0 #fff;font-size:14.9px;color:#1818b0;line-height:19px;">2 channel Display</div>
<div class="f-s tc" style="left:1389px;top:114px;width:310px;height:22px;background:#f0f0f0;border:1px solid #6e6e6e;border-right-width:2px;border-bottom:none;border-radius:4px 4px 0 0;box-shadow:inset 1px 1px 0 #fff;font-size:15.5px;color:#0808b0;font-weight:bold;line-height:23px;">4 channel Display</div>
<div class="f-s tc" style="left:1129px;top:203px;width:167px;height:39px;background:#00ffff;border:1px solid;border-color:#7c7c7c #fff #fff #7c7c7c;font-size:24px;color:#002828;line-height:37px;border-color:#5f8c8c #e8f4f4 #e8f4f4 #5f8c8c;"><span style="position:relative;top:-5px">DEGREE C</span></div>
<div class="f-s tc" style="left:1297px;top:203px;width:63px;height:39px;background:#ffdcc0;border:1px solid;border-color:#7c7c7c #fff #fff #7c7c7c;font-size:30px;color:#0000c8;line-height:37px;"><span style="position:relative;top:-1px">1</span></div>
<div class="led" aria-label="24.4" style="left:1129px;top:244px;width:231px;height:70px;border:1px solid;border-color:#7c8684 #fff #fff #7c8684;"><div style="left:0;top:0;right:0;bottom:0;background:#4d0000;border:2px solid #ebe1e1;overflow:hidden;"><div class="dg" style="left:8.6px;top:3.6px;width:27.6px;height:54.7px;"><i style="left:0.45px;top:-0.6px;width:13.3px;border-top:6.3px solid #7a0a0a;border-left:6.7px solid transparent;border-right:6.7px solid transparent;"></i><i style="left:0.45px;top:49px;width:13.3px;border-bottom:6.3px solid #7a0a0a;border-left:6.7px solid transparent;border-right:6.7px solid transparent;"></i><i style="left:0.45px;top:24.35px;width:20.7px;border-bottom:3px solid #7a0a0a;border-left:3px solid transparent;border-right:3px solid transparent;"></i><i style="left:0.45px;top:26.35px;width:20.7px;border-top:4px solid #7a0a0a;border-left:3px solid transparent;border-right:3px solid transparent;"></i><i style="left:-0.6px;top:0.45px;height:13.25px;border-left:6.7px solid #7a0a0a;border-top:6.3px solid transparent;border-bottom:6.3px solid transparent;"></i><i style="left:21.5px;top:0.45px;height:13.25px;border-right:6.7px solid #7a0a0a;border-top:6.3px solid transparent;border-bottom:6.3px solid transparent;"></i><i style="left:-0.6px;top:28.4px;height:13.25px;border-left:6.7px solid #7a0a0a;border-top:6.3px solid transparent;border-bottom:6.3px solid transparent;"></i><i style="left:21.5px;top:28.4px;height:13.25px;border-right:6.7px solid #7a0a0a;border-top:6.3px solid transparent;border-bottom:6.3px solid transparent;"></i></div><div class="dg" style="left:45.6px;top:3.6px;width:27.6px;height:54.7px;"><i style="left:0.45px;top:-0.6px;width:13.3px;border-top:6.3px solid #7a0a0a;border-left:6.7px solid transparent;border-right:6.7px solid transparent;"></i><i style="left:0.45px;top:49px;width:13.3px;border-bottom:6.3px solid #7a0a0a;border-left:6.7px solid transparent;border-right:6.7px solid transparent;"></i><i style="left:0.45px;top:24.35px;width:20.7px;border-bottom:3px solid #7a0a0a;border-left:3px solid transparent;border-right:3px solid transparent;"></i><i style="left:0.45px;top:26.35px;width:20.7px;border-top:4px solid #7a0a0a;border-left:3px solid transparent;border-right:3px solid transparent;"></i><i style="left:-0.6px;top:0.45px;height:13.25px;border-left:6.7px solid #7a0a0a;border-top:6.3px solid transparent;border-bottom:6.3px solid transparent;"></i><i style="left:21.5px;top:0.45px;height:13.25px;border-right:6.7px solid #7a0a0a;border-top:6.3px solid transparent;border-bottom:6.3px solid transparent;"></i><i style="left:-0.6px;top:28.4px;height:13.25px;border-left:6.7px solid #7a0a0a;border-top:6.3px solid transparent;border-bottom:6.3px solid transparent;"></i><i style="left:21.5px;top:28.4px;height:13.25px;border-right:6.7px solid #7a0a0a;border-top:6.3px solid transparent;border-bottom:6.3px solid transparent;"></i></div><div class="dg" style="left:82.6px;top:3.6px;width:27.6px;height:54.7px;"><i style="left:0.45px;top:-0.6px;width:13.3px;border-top:6.3px solid #7a0a0a;border-left:6.7px solid transparent;border-right:6.7px solid transparent;"></i><i style="left:0.45px;top:49px;width:13.3px;border-bottom:6.3px solid #7a0a0a;border-left:6.7px solid transparent;border-right:6.7px solid transparent;"></i><i style="left:0.45px;top:24.35px;width:20.7px;border-bottom:3px solid #7a0a0a;border-left:3px solid transparent;border-right:3px solid transparent;"></i><i style="left:0.45px;top:26.35px;width:20.7px;border-top:4px solid #7a0a0a;border-left:3px solid transparent;border-right:3px solid transparent;"></i><i style="left:-0.6px;top:0.45px;height:13.25px;border-left:6.7px solid #7a0a0a;border-top:6.3px solid transparent;border-bottom:6.3px solid transparent;"></i><i style="left:21.5px;top:0.45px;height:13.25px;border-right:6.7px solid #7a0a0a;border-top:6.3px solid transparent;border-bottom:6.3px solid transparent;"></i><i style="left:-0.6px;top:28.4px;height:13.25px;border-left:6.7px solid #7a0a0a;border-top:6.3px solid transparent;border-bottom:6.3px solid transparent;"></i><i style="left:21.5px;top:28.4px;height:13.25px;border-right:6.7px solid #7a0a0a;border-top:6.3px solid transparent;border-bottom:6.3px solid transparent;"></i></div><div class="dg" style="left:119.6px;top:3.6px;width:27.6px;height:54.7px;"><i style="left:-0.6px;top:0.45px;height:13.25px;border-left:6.7px solid #7a0a0a;border-top:6.3px solid transparent;border-bottom:6.3px solid transparent;"></i><i style="left:21.5px;top:28.4px;height:13.25px;border-right:6.7px solid #7a0a0a;border-top:6.3px solid transparent;border-bottom:6.3px solid transparent;"></i><i style="left:1.05px;top:0px;width:14.5px;border-top:5.1px solid #80ff80;border-left:5.5px solid transparent;border-right:5.5px solid transparent;"></i><i style="left:1.05px;top:49.6px;width:14.5px;border-bottom:5.1px solid #80ff80;border-left:5.5px solid transparent;border-right:5.5px solid transparent;"></i><i style="left:1.05px;top:24.35px;width:21.5px;border-bottom:3px solid #80ff80;border-left:2px solid transparent;border-right:2px solid transparent;"></i><i style="left:1.05px;top:26.35px;width:21.5px;border-top:4px solid #80ff80;border-left:2px solid transparent;border-right:2px solid transparent;"></i><i style="left:22.1px;top:1.05px;height:15.05px;border-right:5.5px solid #80ff80;border-top:5.1px solid transparent;border-bottom:5.1px solid transparent;"></i><i style="left:0px;top:28.4px;height:15.05px;border-left:5.5px solid #80ff80;border-top:5.1px solid transparent;border-bottom:5.1px solid transparent;"></i></div><div class="dg" style="left:156.6px;top:3.6px;width:27.6px;height:54.7px;"><i style="left:0.45px;top:-0.6px;width:13.3px;border-top:6.3px solid #7a0a0a;border-left:6.7px solid transparent;border-right:6.7px solid transparent;"></i><i style="left:0.45px;top:49px;width:13.3px;border-bottom:6.3px solid #7a0a0a;border-left:6.7px solid transparent;border-right:6.7px solid transparent;"></i><i style="left:-0.6px;top:28.4px;height:13.25px;border-left:6.7px solid #7a0a0a;border-top:6.3px solid transparent;border-bottom:6.3px solid transparent;"></i><i style="left:1.05px;top:24.35px;width:21.5px;border-bottom:3px solid #80ff80;border-left:2px solid transparent;border-right:2px solid transparent;"></i><i style="left:1.05px;top:26.35px;width:21.5px;border-top:4px solid #80ff80;border-left:2px solid transparent;border-right:2px solid transparent;"></i><i style="left:0px;top:1.05px;height:15.05px;border-left:5.5px solid #80ff80;border-top:5.1px solid transparent;border-bottom:5.1px solid transparent;"></i><i style="left:22.1px;top:1.05px;height:15.05px;border-right:5.5px solid #80ff80;border-top:5.1px solid transparent;border-bottom:5.1px solid transparent;"></i><i style="left:22.1px;top:28.4px;height:15.05px;border-right:5.5px solid #80ff80;border-top:5.1px solid transparent;border-bottom:5.1px solid transparent;"></i></div><div class="dg" style="left:193.6px;top:3.6px;width:27.6px;height:54.7px;"><i style="left:0.45px;top:-0.6px;width:13.3px;border-top:6.3px solid #7a0a0a;border-left:6.7px solid transparent;border-right:6.7px solid transparent;"></i><i style="left:0.45px;top:49px;width:13.3px;border-bottom:6.3px solid #7a0a0a;border-left:6.7px solid transparent;border-right:6.7px solid transparent;"></i><i style="left:-0.6px;top:28.4px;height:13.25px;border-left:6.7px solid #7a0a0a;border-top:6.3px solid transparent;border-bottom:6.3px solid transparent;"></i><i style="left:1.05px;top:24.35px;width:21.5px;border-bottom:3px solid #80ff80;border-left:2px solid transparent;border-right:2px solid transparent;"></i><i style="left:1.05px;top:26.35px;width:21.5px;border-top:4px solid #80ff80;border-left:2px solid transparent;border-right:2px solid transparent;"></i><i style="left:0px;top:1.05px;height:15.05px;border-left:5.5px solid #80ff80;border-top:5.1px solid transparent;border-bottom:5.1px solid transparent;"></i><i style="left:22.1px;top:1.05px;height:15.05px;border-right:5.5px solid #80ff80;border-top:5.1px solid transparent;border-bottom:5.1px solid transparent;"></i><i style="left:22.1px;top:28.4px;height:15.05px;border-right:5.5px solid #80ff80;border-top:5.1px solid transparent;border-bottom:5.1px solid transparent;"></i></div><div style="left:186.6px;top:57.8px;width:4.6px;height:4px;background:#98ff98"></div></div></div>
<div class="f-s tc" style="left:1425px;top:203px;width:167px;height:39px;background:#00ffff;border:1px solid;border-color:#7c7c7c #fff #fff #7c7c7c;font-size:24px;color:#002828;line-height:37px;border-color:#5f8c8c #e8f4f4 #e8f4f4 #5f8c8c;"><span style="position:relative;top:-5px">DEGREE C</span></div>
<div class="f-s tc" style="left:1593px;top:203px;width:63px;height:39px;background:#ffdcc0;border:1px solid;border-color:#7c7c7c #fff #fff #7c7c7c;font-size:30px;color:#0000c8;line-height:37px;"><span style="position:relative;top:-1px">2</span></div>
<div class="led" aria-label="23.2" style="left:1425px;top:244px;width:231px;height:70px;border:1px solid;border-color:#7c8684 #fff #fff #7c8684;"><div style="left:0;top:0;right:0;bottom:0;background:#4d0000;border:2px solid #ebe1e1;overflow:hidden;"><div class="dg" style="left:8.6px;top:3.6px;width:27.6px;height:54.7px;"><i style="left:0.45px;top:-0.6px;width:13.3px;border-top:6.3px solid #7a0a0a;border-left:6.7px solid transparent;border-right:6.7px solid transparent;"></i><i style="left:0.45px;top:49px;width:13.3px;border-bottom:6.3px solid #7a0a0a;border-left:6.7px solid transparent;border-right:6.7px solid transparent;"></i><i style="left:0.45px;top:24.35px;width:20.7px;border-bottom:3px solid #7a0a0a;border-left:3px solid transparent;border-right:3px solid transparent;"></i><i style="left:0.45px;top:26.35px;width:20.7px;border-top:4px solid #7a0a0a;border-left:3px solid transparent;border-right:3px solid transparent;"></i><i style="left:-0.6px;top:0.45px;height:13.25px;border-left:6.7px solid #7a0a0a;border-top:6.3px solid transparent;border-bottom:6.3px solid transparent;"></i><i style="left:21.5px;top:0.45px;height:13.25px;border-right:6.7px solid #7a0a0a;border-top:6.3px solid transparent;border-bottom:6.3px solid transparent;"></i><i style="left:-0.6px;top:28.4px;height:13.25px;border-left:6.7px solid #7a0a0a;border-top:6.3px solid transparent;border-bottom:6.3px solid transparent;"></i><i style="left:21.5px;top:28.4px;height:13.25px;border-right:6.7px solid #7a0a0a;border-top:6.3px solid transparent;border-bottom:6.3px solid transparent;"></i></div><div class="dg" style="left:45.6px;top:3.6px;width:27.6px;height:54.7px;"><i style="left:0.45px;top:-0.6px;width:13.3px;border-top:6.3px solid #7a0a0a;border-left:6.7px solid transparent;border-right:6.7px solid transparent;"></i><i style="left:0.45px;top:49px;width:13.3px;border-bottom:6.3px solid #7a0a0a;border-left:6.7px solid transparent;border-right:6.7px solid transparent;"></i><i style="left:0.45px;top:24.35px;width:20.7px;border-bottom:3px solid #7a0a0a;border-left:3px solid transparent;border-right:3px solid transparent;"></i><i style="left:0.45px;top:26.35px;width:20.7px;border-top:4px solid #7a0a0a;border-left:3px solid transparent;border-right:3px solid transparent;"></i><i style="left:-0.6px;top:0.45px;height:13.25px;border-left:6.7px solid #7a0a0a;border-top:6.3px solid transparent;border-bottom:6.3px solid transparent;"></i><i style="left:21.5px;top:0.45px;height:13.25px;border-right:6.7px solid #7a0a0a;border-top:6.3px solid transparent;border-bottom:6.3px solid transparent;"></i><i style="left:-0.6px;top:28.4px;height:13.25px;border-left:6.7px solid #7a0a0a;border-top:6.3px solid transparent;border-bottom:6.3px solid transparent;"></i><i style="left:21.5px;top:28.4px;height:13.25px;border-right:6.7px solid #7a0a0a;border-top:6.3px solid transparent;border-bottom:6.3px solid transparent;"></i></div><div class="dg" style="left:82.6px;top:3.6px;width:27.6px;height:54.7px;"><i style="left:0.45px;top:-0.6px;width:13.3px;border-top:6.3px solid #7a0a0a;border-left:6.7px solid transparent;border-right:6.7px solid transparent;"></i><i style="left:0.45px;top:49px;width:13.3px;border-bottom:6.3px solid #7a0a0a;border-left:6.7px solid transparent;border-right:6.7px solid transparent;"></i><i style="left:0.45px;top:24.35px;width:20.7px;border-bottom:3px solid #7a0a0a;border-left:3px solid transparent;border-right:3px solid transparent;"></i><i style="left:0.45px;top:26.35px;width:20.7px;border-top:4px solid #7a0a0a;border-left:3px solid transparent;border-right:3px solid transparent;"></i><i style="left:-0.6px;top:0.45px;height:13.25px;border-left:6.7px solid #7a0a0a;border-top:6.3px solid transparent;border-bottom:6.3px solid transparent;"></i><i style="left:21.5px;top:0.45px;height:13.25px;border-right:6.7px solid #7a0a0a;border-top:6.3px solid transparent;border-bottom:6.3px solid transparent;"></i><i style="left:-0.6px;top:28.4px;height:13.25px;border-left:6.7px solid #7a0a0a;border-top:6.3px solid transparent;border-bottom:6.3px solid transparent;"></i><i style="left:21.5px;top:28.4px;height:13.25px;border-right:6.7px solid #7a0a0a;border-top:6.3px solid transparent;border-bottom:6.3px solid transparent;"></i></div><div class="dg" style="left:119.6px;top:3.6px;width:27.6px;height:54.7px;"><i style="left:-0.6px;top:0.45px;height:13.25px;border-left:6.7px solid #7a0a0a;border-top:6.3px solid transparent;border-bottom:6.3px solid transparent;"></i><i style="left:21.5px;top:28.4px;height:13.25px;border-right:6.7px solid #7a0a0a;border-top:6.3px solid transparent;border-bottom:6.3px solid transparent;"></i><i style="left:1.05px;top:0px;width:14.5px;border-top:5.1px solid #80ff80;border-left:5.5px solid transparent;border-right:5.5px solid transparent;"></i><i style="left:1.05px;top:49.6px;width:14.5px;border-bottom:5.1px solid #80ff80;border-left:5.5px solid transparent;border-right:5.5px solid transparent;"></i><i style="left:1.05px;top:24.35px;width:21.5px;border-bottom:3px solid #80ff80;border-left:2px solid transparent;border-right:2px solid transparent;"></i><i style="left:1.05px;top:26.35px;width:21.5px;border-top:4px solid #80ff80;border-left:2px solid transparent;border-right:2px solid transparent;"></i><i style="left:22.1px;top:1.05px;height:15.05px;border-right:5.5px solid #80ff80;border-top:5.1px solid transparent;border-bottom:5.1px solid transparent;"></i><i style="left:0px;top:28.4px;height:15.05px;border-left:5.5px solid #80ff80;border-top:5.1px solid transparent;border-bottom:5.1px solid transparent;"></i></div><div class="dg" style="left:156.6px;top:3.6px;width:27.6px;height:54.7px;"><i style="left:-0.6px;top:0.45px;height:13.25px;border-left:6.7px solid #7a0a0a;border-top:6.3px solid transparent;border-bottom:6.3px solid transparent;"></i><i style="left:-0.6px;top:28.4px;height:13.25px;border-left:6.7px solid #7a0a0a;border-top:6.3px solid transparent;border-bottom:6.3px solid transparent;"></i><i style="left:1.05px;top:0px;width:14.5px;border-top:5.1px solid #80ff80;border-left:5.5px solid transparent;border-right:5.5px solid transparent;"></i><i style="left:1.05px;top:49.6px;width:14.5px;border-bottom:5.1px solid #80ff80;border-left:5.5px solid transparent;border-right:5.5px solid transparent;"></i><i style="left:1.05px;top:24.35px;width:21.5px;border-bottom:3px solid #80ff80;border-left:2px solid transparent;border-right:2px solid transparent;"></i><i style="left:1.05px;top:26.35px;width:21.5px;border-top:4px solid #80ff80;border-left:2px solid transparent;border-right:2px solid transparent;"></i><i style="left:22.1px;top:1.05px;height:15.05px;border-right:5.5px solid #80ff80;border-top:5.1px solid transparent;border-bottom:5.1px solid transparent;"></i><i style="left:22.1px;top:28.4px;height:15.05px;border-right:5.5px solid #80ff80;border-top:5.1px solid transparent;border-bottom:5.1px solid transparent;"></i></div><div class="dg" style="left:193.6px;top:3.6px;width:27.6px;height:54.7px;"><i style="left:-0.6px;top:0.45px;height:13.25px;border-left:6.7px solid #7a0a0a;border-top:6.3px solid transparent;border-bottom:6.3px solid transparent;"></i><i style="left:21.5px;top:28.4px;height:13.25px;border-right:6.7px solid #7a0a0a;border-top:6.3px solid transparent;border-bottom:6.3px solid transparent;"></i><i style="left:1.05px;top:0px;width:14.5px;border-top:5.1px solid #80ff80;border-left:5.5px solid transparent;border-right:5.5px solid transparent;"></i><i style="left:1.05px;top:49.6px;width:14.5px;border-bottom:5.1px solid #80ff80;border-left:5.5px solid transparent;border-right:5.5px solid transparent;"></i><i style="left:1.05px;top:24.35px;width:21.5px;border-bottom:3px solid #80ff80;border-left:2px solid transparent;border-right:2px solid transparent;"></i><i style="left:1.05px;top:26.35px;width:21.5px;border-top:4px solid #80ff80;border-left:2px solid transparent;border-right:2px solid transparent;"></i><i style="left:22.1px;top:1.05px;height:15.05px;border-right:5.5px solid #80ff80;border-top:5.1px solid transparent;border-bottom:5.1px solid transparent;"></i><i style="left:0px;top:28.4px;height:15.05px;border-left:5.5px solid #80ff80;border-top:5.1px solid transparent;border-bottom:5.1px solid transparent;"></i></div><div style="left:186.6px;top:57.8px;width:4.6px;height:4px;background:#98ff98"></div></div></div>
<div class="f-s tc" style="left:1129px;top:403px;width:167px;height:39px;background:#00ffff;border:1px solid;border-color:#7c7c7c #fff #fff #7c7c7c;font-size:24px;color:#002828;line-height:37px;border-color:#5f8c8c #e8f4f4 #e8f4f4 #5f8c8c;"><span style="position:relative;top:-5px">DEGREE C</span></div>
<div class="f-s tc" style="left:1297px;top:403px;width:63px;height:39px;background:#ffdcc0;border:1px solid;border-color:#7c7c7c #fff #fff #7c7c7c;font-size:30px;color:#0000c8;line-height:37px;"><span style="position:relative;top:-1px">3</span></div>
<div class="led" aria-label="23.4" style="left:1129px;top:444px;width:231px;height:70px;border:1px solid;border-color:#7c8684 #fff #fff #7c8684;"><div style="left:0;top:0;right:0;bottom:0;background:#4d0000;border:2px solid #ebe1e1;overflow:hidden;"><div class="dg" style="left:8.6px;top:3.6px;width:27.6px;height:54.7px;"><i style="left:0.45px;top:-0.6px;width:13.3px;border-top:6.3px solid #7a0a0a;border-left:6.7px solid transparent;border-right:6.7px solid transparent;"></i><i style="left:0.45px;top:49px;width:13.3px;border-bottom:6.3px solid #7a0a0a;border-left:6.7px solid transparent;border-right:6.7px solid transparent;"></i><i style="left:0.45px;top:24.35px;width:20.7px;border-bottom:3px solid #7a0a0a;border-left:3px solid transparent;border-right:3px solid transparent;"></i><i style="left:0.45px;top:26.35px;width:20.7px;border-top:4px solid #7a0a0a;border-left:3px solid transparent;border-right:3px solid transparent;"></i><i style="left:-0.6px;top:0.45px;height:13.25px;border-left:6.7px solid #7a0a0a;border-top:6.3px solid transparent;border-bottom:6.3px solid transparent;"></i><i style="left:21.5px;top:0.45px;height:13.25px;border-right:6.7px solid #7a0a0a;border-top:6.3px solid transparent;border-bottom:6.3px solid transparent;"></i><i style="left:-0.6px;top:28.4px;height:13.25px;border-left:6.7px solid #7a0a0a;border-top:6.3px solid transparent;border-bottom:6.3px solid transparent;"></i><i style="left:21.5px;top:28.4px;height:13.25px;border-right:6.7px solid #7a0a0a;border-top:6.3px solid transparent;border-bottom:6.3px solid transparent;"></i></div><div class="dg" style="left:45.6px;top:3.6px;width:27.6px;height:54.7px;"><i style="left:0.45px;top:-0.6px;width:13.3px;border-top:6.3px solid #7a0a0a;border-left:6.7px solid transparent;border-right:6.7px solid transparent;"></i><i style="left:0.45px;top:49px;width:13.3px;border-bottom:6.3px solid #7a0a0a;border-left:6.7px solid transparent;border-right:6.7px solid transparent;"></i><i style="left:0.45px;top:24.35px;width:20.7px;border-bottom:3px solid #7a0a0a;border-left:3px solid transparent;border-right:3px solid transparent;"></i><i style="left:0.45px;top:26.35px;width:20.7px;border-top:4px solid #7a0a0a;border-left:3px solid transparent;border-right:3px solid transparent;"></i><i style="left:-0.6px;top:0.45px;height:13.25px;border-left:6.7px solid #7a0a0a;border-top:6.3px solid transparent;border-bottom:6.3px solid transparent;"></i><i style="left:21.5px;top:0.45px;height:13.25px;border-right:6.7px solid #7a0a0a;border-top:6.3px solid transparent;border-bottom:6.3px solid transparent;"></i><i style="left:-0.6px;top:28.4px;height:13.25px;border-left:6.7px solid #7a0a0a;border-top:6.3px solid transparent;border-bottom:6.3px solid transparent;"></i><i style="left:21.5px;top:28.4px;height:13.25px;border-right:6.7px solid #7a0a0a;border-top:6.3px solid transparent;border-bottom:6.3px solid transparent;"></i></div><div class="dg" style="left:82.6px;top:3.6px;width:27.6px;height:54.7px;"><i style="left:0.45px;top:-0.6px;width:13.3px;border-top:6.3px solid #7a0a0a;border-left:6.7px solid transparent;border-right:6.7px solid transparent;"></i><i style="left:0.45px;top:49px;width:13.3px;border-bottom:6.3px solid #7a0a0a;border-left:6.7px solid transparent;border-right:6.7px solid transparent;"></i><i style="left:0.45px;top:24.35px;width:20.7px;border-bottom:3px solid #7a0a0a;border-left:3px solid transparent;border-right:3px solid transparent;"></i><i style="left:0.45px;top:26.35px;width:20.7px;border-top:4px solid #7a0a0a;border-left:3px solid transparent;border-right:3px solid transparent;"></i><i style="left:-0.6px;top:0.45px;height:13.25px;border-left:6.7px solid #7a0a0a;border-top:6.3px solid transparent;border-bottom:6.3px solid transparent;"></i><i style="left:21.5px;top:0.45px;height:13.25px;border-right:6.7px solid #7a0a0a;border-top:6.3px solid transparent;border-bottom:6.3px solid transparent;"></i><i style="left:-0.6px;top:28.4px;height:13.25px;border-left:6.7px solid #7a0a0a;border-top:6.3px solid transparent;border-bottom:6.3px solid transparent;"></i><i style="left:21.5px;top:28.4px;height:13.25px;border-right:6.7px solid #7a0a0a;border-top:6.3px solid transparent;border-bottom:6.3px solid transparent;"></i></div><div class="dg" style="left:119.6px;top:3.6px;width:27.6px;height:54.7px;"><i style="left:-0.6px;top:0.45px;height:13.25px;border-left:6.7px solid #7a0a0a;border-top:6.3px solid transparent;border-bottom:6.3px solid transparent;"></i><i style="left:21.5px;top:28.4px;height:13.25px;border-right:6.7px solid #7a0a0a;border-top:6.3px solid transparent;border-bottom:6.3px solid transparent;"></i><i style="left:1.05px;top:0px;width:14.5px;border-top:5.1px solid #80ff80;border-left:5.5px solid transparent;border-right:5.5px solid transparent;"></i><i style="left:1.05px;top:49.6px;width:14.5px;border-bottom:5.1px solid #80ff80;border-left:5.5px solid transparent;border-right:5.5px solid transparent;"></i><i style="left:1.05px;top:24.35px;width:21.5px;border-bottom:3px solid #80ff80;border-left:2px solid transparent;border-right:2px solid transparent;"></i><i style="left:1.05px;top:26.35px;width:21.5px;border-top:4px solid #80ff80;border-left:2px solid transparent;border-right:2px solid transparent;"></i><i style="left:22.1px;top:1.05px;height:15.05px;border-right:5.5px solid #80ff80;border-top:5.1px solid transparent;border-bottom:5.1px solid transparent;"></i><i style="left:0px;top:28.4px;height:15.05px;border-left:5.5px solid #80ff80;border-top:5.1px solid transparent;border-bottom:5.1px solid transparent;"></i></div><div class="dg" style="left:156.6px;top:3.6px;width:27.6px;height:54.7px;"><i style="left:-0.6px;top:0.45px;height:13.25px;border-left:6.7px solid #7a0a0a;border-top:6.3px solid transparent;border-bottom:6.3px solid transparent;"></i><i style="left:-0.6px;top:28.4px;height:13.25px;border-left:6.7px solid #7a0a0a;border-top:6.3px solid transparent;border-bottom:6.3px solid transparent;"></i><i style="left:1.05px;top:0px;width:14.5px;border-top:5.1px solid #80ff80;border-left:5.5px solid transparent;border-right:5.5px solid transparent;"></i><i style="left:1.05px;top:49.6px;width:14.5px;border-bottom:5.1px solid #80ff80;border-left:5.5px solid transparent;border-right:5.5px solid transparent;"></i><i style="left:1.05px;top:24.35px;width:21.5px;border-bottom:3px solid #80ff80;border-left:2px solid transparent;border-right:2px solid transparent;"></i><i style="left:1.05px;top:26.35px;width:21.5px;border-top:4px solid #80ff80;border-left:2px solid transparent;border-right:2px solid transparent;"></i><i style="left:22.1px;top:1.05px;height:15.05px;border-right:5.5px solid #80ff80;border-top:5.1px solid transparent;border-bottom:5.1px solid transparent;"></i><i style="left:22.1px;top:28.4px;height:15.05px;border-right:5.5px solid #80ff80;border-top:5.1px solid transparent;border-bottom:5.1px solid transparent;"></i></div><div class="dg" style="left:193.6px;top:3.6px;width:27.6px;height:54.7px;"><i style="left:0.45px;top:-0.6px;width:13.3px;border-top:6.3px solid #7a0a0a;border-left:6.7px solid transparent;border-right:6.7px solid transparent;"></i><i style="left:0.45px;top:49px;width:13.3px;border-bottom:6.3px solid #7a0a0a;border-left:6.7px solid transparent;border-right:6.7px solid transparent;"></i><i style="left:-0.6px;top:28.4px;height:13.25px;border-left:6.7px solid #7a0a0a;border-top:6.3px solid transparent;border-bottom:6.3px solid transparent;"></i><i style="left:1.05px;top:24.35px;width:21.5px;border-bottom:3px solid #80ff80;border-left:2px solid transparent;border-right:2px solid transparent;"></i><i style="left:1.05px;top:26.35px;width:21.5px;border-top:4px solid #80ff80;border-left:2px solid transparent;border-right:2px solid transparent;"></i><i style="left:0px;top:1.05px;height:15.05px;border-left:5.5px solid #80ff80;border-top:5.1px solid transparent;border-bottom:5.1px solid transparent;"></i><i style="left:22.1px;top:1.05px;height:15.05px;border-right:5.5px solid #80ff80;border-top:5.1px solid transparent;border-bottom:5.1px solid transparent;"></i><i style="left:22.1px;top:28.4px;height:15.05px;border-right:5.5px solid #80ff80;border-top:5.1px solid transparent;border-bottom:5.1px solid transparent;"></i></div><div style="left:186.6px;top:57.8px;width:4.6px;height:4px;background:#98ff98"></div></div></div>
<div class="f-s tc" style="left:1425px;top:394px;width:175px;height:39px;background:#00ffff;border:1px solid;border-color:#7c7c7c #fff #fff #7c7c7c;font-size:24px;color:#002828;line-height:37px;border-color:#5f8c8c #e8f4f4 #e8f4f4 #5f8c8c;"><span style="position:relative;top:-5px">DEGREE C</span></div>
<div class="f-s tc" style="left:1601px;top:394px;width:55px;height:39px;background:#ffdcc0;border:1px solid;border-color:#7c7c7c #fff #fff #7c7c7c;font-size:30px;color:#0000c8;line-height:37px;"><span style="position:relative;top:-1px">4</span></div>
<div class="led" aria-label="21.5" style="left:1425px;top:435px;width:231px;height:70px;border:1px solid;border-color:#7c8684 #fff #fff #7c8684;"><div style="left:0;top:0;right:0;bottom:0;background:#4d0000;border:2px solid #ebe1e1;overflow:hidden;"><div class="dg" style="left:8.6px;top:3.6px;width:27.6px;height:54.7px;"><i style="left:0.45px;top:-0.6px;width:13.3px;border-top:6.3px solid #7a0a0a;border-left:6.7px solid transparent;border-right:6.7px solid transparent;"></i><i style="left:0.45px;top:49px;width:13.3px;border-bottom:6.3px solid #7a0a0a;border-left:6.7px solid transparent;border-right:6.7px solid transparent;"></i><i style="left:0.45px;top:24.35px;width:20.7px;border-bottom:3px solid #7a0a0a;border-left:3px solid transparent;border-right:3px solid transparent;"></i><i style="left:0.45px;top:26.35px;width:20.7px;border-top:4px solid #7a0a0a;border-left:3px solid transparent;border-right:3px solid transparent;"></i><i style="left:-0.6px;top:0.45px;height:13.25px;border-left:6.7px solid #7a0a0a;border-top:6.3px solid transparent;border-bottom:6.3px solid transparent;"></i><i style="left:21.5px;top:0.45px;height:13.25px;border-right:6.7px solid #7a0a0a;border-top:6.3px solid transparent;border-bottom:6.3px solid transparent;"></i><i style="left:-0.6px;top:28.4px;height:13.25px;border-left:6.7px solid #7a0a0a;border-top:6.3px solid transparent;border-bottom:6.3px solid transparent;"></i><i style="left:21.5px;top:28.4px;height:13.25px;border-right:6.7px solid #7a0a0a;border-top:6.3px solid transparent;border-bottom:6.3px solid transparent;"></i></div><div class="dg" style="left:45.6px;top:3.6px;width:27.6px;height:54.7px;"><i style="left:0.45px;top:-0.6px;width:13.3px;border-top:6.3px solid #7a0a0a;border-left:6.7px solid transparent;border-right:6.7px solid transparent;"></i><i style="left:0.45px;top:49px;width:13.3px;border-bottom:6.3px solid #7a0a0a;border-left:6.7px solid transparent;border-right:6.7px solid transparent;"></i><i style="left:0.45px;top:24.35px;width:20.7px;border-bottom:3px solid #7a0a0a;border-left:3px solid transparent;border-right:3px solid transparent;"></i><i style="left:0.45px;top:26.35px;width:20.7px;border-top:4px solid #7a0a0a;border-left:3px solid transparent;border-right:3px solid transparent;"></i><i style="left:-0.6px;top:0.45px;height:13.25px;border-left:6.7px solid #7a0a0a;border-top:6.3px solid transparent;border-bottom:6.3px solid transparent;"></i><i style="left:21.5px;top:0.45px;height:13.25px;border-right:6.7px solid #7a0a0a;border-top:6.3px solid transparent;border-bottom:6.3px solid transparent;"></i><i style="left:-0.6px;top:28.4px;height:13.25px;border-left:6.7px solid #7a0a0a;border-top:6.3px solid transparent;border-bottom:6.3px solid transparent;"></i><i style="left:21.5px;top:28.4px;height:13.25px;border-right:6.7px solid #7a0a0a;border-top:6.3px solid transparent;border-bottom:6.3px solid transparent;"></i></div><div class="dg" style="left:82.6px;top:3.6px;width:27.6px;height:54.7px;"><i style="left:0.45px;top:-0.6px;width:13.3px;border-top:6.3px solid #7a0a0a;border-left:6.7px solid transparent;border-right:6.7px solid transparent;"></i><i style="left:0.45px;top:49px;width:13.3px;border-bottom:6.3px solid #7a0a0a;border-left:6.7px solid transparent;border-right:6.7px solid transparent;"></i><i style="left:0.45px;top:24.35px;width:20.7px;border-bottom:3px solid #7a0a0a;border-left:3px solid transparent;border-right:3px solid transparent;"></i><i style="left:0.45px;top:26.35px;width:20.7px;border-top:4px solid #7a0a0a;border-left:3px solid transparent;border-right:3px solid transparent;"></i><i style="left:-0.6px;top:0.45px;height:13.25px;border-left:6.7px solid #7a0a0a;border-top:6.3px solid transparent;border-bottom:6.3px solid transparent;"></i><i style="left:21.5px;top:0.45px;height:13.25px;border-right:6.7px solid #7a0a0a;border-top:6.3px solid transparent;border-bottom:6.3px solid transparent;"></i><i style="left:-0.6px;top:28.4px;height:13.25px;border-left:6.7px solid #7a0a0a;border-top:6.3px solid transparent;border-bottom:6.3px solid transparent;"></i><i style="left:21.5px;top:28.4px;height:13.25px;border-right:6.7px solid #7a0a0a;border-top:6.3px solid transparent;border-bottom:6.3px solid transparent;"></i></div><div class="dg" style="left:119.6px;top:3.6px;width:27.6px;height:54.7px;"><i style="left:-0.6px;top:0.45px;height:13.25px;border-left:6.7px solid #7a0a0a;border-top:6.3px solid transparent;border-bottom:6.3px solid transparent;"></i><i style="left:21.5px;top:28.4px;height:13.25px;border-right:6.7px solid #7a0a0a;border-top:6.3px solid transparent;border-bottom:6.3px solid transparent;"></i><i style="left:1.05px;top:0px;width:14.5px;border-top:5.1px solid #80ff80;border-left:5.5px solid transparent;border-right:5.5px solid transparent;"></i><i style="left:1.05px;top:49.6px;width:14.5px;border-bottom:5.1px solid #80ff80;border-left:5.5px solid transparent;border-right:5.5px solid transparent;"></i><i style="left:1.05px;top:24.35px;width:21.5px;border-bottom:3px solid #80ff80;border-left:2px solid transparent;border-right:2px solid transparent;"></i><i style="left:1.05px;top:26.35px;width:21.5px;border-top:4px solid #80ff80;border-left:2px solid transparent;border-right:2px solid transparent;"></i><i style="left:22.1px;top:1.05px;height:15.05px;border-right:5.5px solid #80ff80;border-top:5.1px solid transparent;border-bottom:5.1px solid transparent;"></i><i style="left:0px;top:28.4px;height:15.05px;border-left:5.5px solid #80ff80;border-top:5.1px solid transparent;border-bottom:5.1px solid transparent;"></i></div><div class="dg" style="left:156.6px;top:3.6px;width:27.6px;height:54.7px;"><i style="left:0.45px;top:-0.6px;width:13.3px;border-top:6.3px solid #7a0a0a;border-left:6.7px solid transparent;border-right:6.7px solid transparent;"></i><i style="left:0.45px;top:49px;width:13.3px;border-bottom:6.3px solid #7a0a0a;border-left:6.7px solid transparent;border-right:6.7px solid transparent;"></i><i style="left:0.45px;top:24.35px;width:20.7px;border-bottom:3px solid #7a0a0a;border-left:3px solid transparent;border-right:3px solid transparent;"></i><i style="left:0.45px;top:26.35px;width:20.7px;border-top:4px solid #7a0a0a;border-left:3px solid transparent;border-right:3px solid transparent;"></i><i style="left:-0.6px;top:0.45px;height:13.25px;border-left:6.7px solid #7a0a0a;border-top:6.3px solid transparent;border-bottom:6.3px solid transparent;"></i><i style="left:-0.6px;top:28.4px;height:13.25px;border-left:6.7px solid #7a0a0a;border-top:6.3px solid transparent;border-bottom:6.3px solid transparent;"></i><i style="left:22.1px;top:1.05px;height:15.05px;border-right:5.5px solid #80ff80;border-top:5.1px solid transparent;border-bottom:5.1px solid transparent;"></i><i style="left:22.1px;top:28.4px;height:15.05px;border-right:5.5px solid #80ff80;border-top:5.1px solid transparent;border-bottom:5.1px solid transparent;"></i></div><div class="dg" style="left:193.6px;top:3.6px;width:27.6px;height:54.7px;"><i style="left:21.5px;top:0.45px;height:13.25px;border-right:6.7px solid #7a0a0a;border-top:6.3px solid transparent;border-bottom:6.3px solid transparent;"></i><i style="left:-0.6px;top:28.4px;height:13.25px;border-left:6.7px solid #7a0a0a;border-top:6.3px solid transparent;border-bottom:6.3px solid transparent;"></i><i style="left:1.05px;top:0px;width:14.5px;border-top:5.1px solid #80ff80;border-left:5.5px solid transparent;border-right:5.5px solid transparent;"></i><i style="left:1.05px;top:49.6px;width:14.5px;border-bottom:5.1px solid #80ff80;border-left:5.5px solid transparent;border-right:5.5px solid transparent;"></i><i style="left:1.05px;top:24.35px;width:21.5px;border-bottom:3px solid #80ff80;border-left:2px solid transparent;border-right:2px solid transparent;"></i><i style="left:1.05px;top:26.35px;width:21.5px;border-top:4px solid #80ff80;border-left:2px solid transparent;border-right:2px solid transparent;"></i><i style="left:0px;top:1.05px;height:15.05px;border-left:5.5px solid #80ff80;border-top:5.1px solid transparent;border-bottom:5.1px solid transparent;"></i><i style="left:22.1px;top:28.4px;height:15.05px;border-right:5.5px solid #80ff80;border-top:5.1px solid transparent;border-bottom:5.1px solid transparent;"></i></div><div style="left:186.6px;top:57.8px;width:4.6px;height:4px;background:#98ff98"></div></div></div>
<div class="f-s tc" style="left:1760px;top:71px;width:88px;height:23px;background:#ffffc0;border:2px solid;border-color:#9c9c9c #fff #fff #9c9c9c;font-size:18px;color:#000080;line-height:19px;"><span style="position:relative;top:0.5px">12-14-2009</span></div>
<div class="f-s tc" style="left:1760px;top:95px;width:88px;height:22px;background:#ffffc0;border:2px solid;border-color:#9c9c9c #fff #fff #9c9c9c;font-size:18px;color:#8c8c6c;line-height:18px;"><span style="position:relative;top:1px">11:17:10</span></div>
<div style="left:1760px;top:150px;width:92px;height:35px;background:#c8c8e8;border:2px solid;border-color:#8c8c8c #fff #fff #8c8c8c;"></div>
<div style="left:1764px;top:153.5px;width:84.5px;height:29.5px;background:#ffff80;border:1px solid #0000a0;"></div>
<div class="f-s tc" style="left:1763.7px;top:152.3px;width:12.93px;height:29.5px;font-size:17px;color:#000080;line-height:29.5px;">0</div>
<div style="left:1775.93px;top:153.5px;width:1px;height:29.5px;background:#0000a0;"></div>
<div class="f-s tc" style="left:1775.63px;top:152.3px;width:12.93px;height:29.5px;font-size:17px;color:#000080;line-height:29.5px;">0</div>
<div style="left:1787.86px;top:153.5px;width:1px;height:29.5px;background:#0000a0;"></div>
<div class="f-s tc" style="left:1787.56px;top:152.3px;width:12.93px;height:29.5px;font-size:17px;color:#000080;line-height:29.5px;">0</div>
<div style="left:1799.79px;top:153.5px;width:1px;height:29.5px;background:#0000a0;"></div>
<div class="f-s tc" style="left:1799.49px;top:152.3px;width:12.93px;height:29.5px;font-size:17px;color:#000080;line-height:29.5px;">0</div>
<div style="left:1811.71px;top:153.5px;width:1px;height:29.5px;background:#0000a0;"></div>
<div class="f-s tc" style="left:1811.41px;top:152.3px;width:12.93px;height:29.5px;font-size:17px;color:#000080;line-height:29.5px;">1</div>
<div style="left:1823.64px;top:153.5px;width:1px;height:29.5px;background:#0000a0;"></div>
<div class="f-s tc" style="left:1823.34px;top:152.3px;width:12.93px;height:29.5px;font-size:17px;color:#000080;line-height:29.5px;">3</div>
<div style="left:1835.57px;top:153.5px;width:1px;height:29.5px;background:#0000a0;"></div>
<div class="f-s tc" style="left:1836.57px;top:154.5px;width:10.93px;height:27.5px;overflow:hidden;font-size:17px;color:#000080;font-weight:bold;"><div style="left:0;width:100%;height:29.5px;line-height:29.5px;top:-12.2px">4</div><div style="left:0;width:100%;height:29.5px;line-height:29.5px;top:6.8px">5</div></div>
<div class="f-s tc" style="left:1760px;top:239px;width:88px;height:23px;background:#f0f0f0;border:2px solid;border-color:#9c9c9c #fff #fff #9c9c9c;font-size:19px;color:#0000a8;line-height:19px;"><span style="position:relative;top:0.5px">Scan Rate</span></div>
<div class="f-s tc" style="left:1760px;top:263px;width:88px;height:23px;background:#ffffc0;border:2px solid;border-color:#9c9c9c #fff #fff #9c9c9c;font-size:19.5px;color:#0000a8;line-height:19px;letter-spacing:.5px;">2 sec</div>
<div class="f-s tc" style="left:1760px;top:327px;width:89px;height:32px;background:#80ff80;border-style:solid;border-width:1px;border-color:#fff #696969 #696969 #fff;box-shadow:inset -1px -1px 0 #a0a0a0;font-size:18px;color:#000;line-height:30px;"><span style="position:relative;top:-0.7px">RUN</span></div>
<div style="left:1760px;top:392px;width:12px;height:12px;background:#fff;border:2px solid;border-color:#7c7c7c #f6f6f6 #f6f6f6 #7c7c7c;"><svg width="8" height="8" viewBox="0 0 8 8" style="left:0;top:0"><path d="M.8 3.6l2.2 2.4 4-4.6" fill="none" stroke="#000" stroke-width="1.9"/></svg></div>
<div class="f-s tl" style="left:1778.5px;top:388px;width:77.5px;height:19px;font-size:13px;color:#1414a8;line-height:19px;">Alarm Sound</div>
<div class="f-s tc" style="left:1752px;top:455px;width:97px;height:32px;background:#ffc0c0;border-style:solid;border-width:1px;border-color:#fff #696969 #696969 #fff;box-shadow:inset -1px -1px 0 #a0a0a0;font-size:15px;color:#000;line-height:30px;"><span style="position:relative;top:-0.7px">Save Data</span></div>
<div class="f-s tc" style="left:1256px;top:591px;width:137px;height:32px;background:#ffffc0;border-style:solid;border-width:1px;border-color:#fff #696969 #696969 #fff;box-shadow:inset -1px -1px 0 #a0a0a0;font-size:15px;color:#000;line-height:30px;"><span style="position:relative;top:-0.7px">Chart Display</span></div>
<div class="f-s tc" style="left:1424px;top:591px;width:129px;height:32px;background:#ffb87c;border-style:solid;border-width:1px;border-color:#fff #696969 #696969 #fff;box-shadow:inset -1px -1px 0 #a0a0a0;font-size:14.5px;color:#000;line-height:30px;"><span style="position:relative;top:-0.7px">AngularDisplay</span></div>
<div class="f-s tc" style="left:1584px;top:591px;width:137px;height:32px;background:#80ff80;border-style:solid;border-width:1px;border-color:#fff #696969 #696969 #fff;box-shadow:inset -1px -1px 0 #a0a0a0;font-size:21.5px;color:#000;line-height:30px;"><span style="position:relative;top:-0.7px">Exit</span></div>
<div class="win" style="left:435px;top:583px;width:820px;height:597px;background:linear-gradient(90deg,#c4d9ef 0%,#c9dcf1 30%,#bcd3ec 65%,#b6cfea 100%);border:1px solid #14324a;border-radius:7px 7px 6px 6px;box-shadow:0 1px 5px 1px rgba(0,0,0,.55),0 2px 16px 4px rgba(0,0,0,.4), inset 0 0 0 1px rgba(165,222,250,.95);"><div style="left:0;top:0;width:330px;height:26px;background:linear-gradient(90deg,rgba(255,255,255,.62) 0,rgba(255,255,255,.5) 55%,rgba(255,255,255,0) 100%)"></div><div style="left:148px;top:-2px;width:146px;height:15px;background:linear-gradient(180deg,rgba(240,150,80,.8) 0,rgba(245,170,100,.55) 55%,rgba(245,170,100,0) 100%);filter:blur(1.5px)"></div><div style="left:366px;top:0;width:8px;height:26px;background:rgba(60,70,90,.18);filter:blur(2px)"></div><div style="left:626px;top:0;width:6px;height:26px;background:rgba(60,70,90,.14);filter:blur(2px)"></div></div>
<svg class="ico" width="13" height="12" viewBox="0 0 13 12" style="left:445px;top:592px"><path d="M.7.7H3v.9h3.6v.9h3v7.8H7.2v-.9h-4v-1H.7z" fill="#fff" stroke="#000" stroke-width="1.3"/><path d="M.7 2.4H3v.9h3.6v.9h3" fill="none" stroke="#000" stroke-width="1.1"/><path d="M10.3 7.2l1.9 2-1.9.5z" fill="#6a7078"/></svg>
<div class="f-a tl" style="left:464px;top:586px;width:371px;height:22px;font-size:12px;color:#000;line-height:22px;">Angular 2/4 Display</div>
<div class="client" style="left:442px;top:610px;width:806px;height:563px;background:#f0f0f0;border:1px solid #77828e;box-shadow:0 0 0 1px rgba(232,241,250,.9);"></div>
<div class="capb" style="left:1156px;top:583px;width:92px;height:18px;border:1px solid #6d7783;border-top:none;border-radius:0 0 5px 5px;background:linear-gradient(180deg,#d4e0ee 0,#c3d2e4 45%,#a9bdd6 50%,#bfd0e4 100%);overflow:hidden;"><div style="left:0;top:0;width:26px;height:17px;border-right:1px solid #8a95a2"></div><div style="left:27px;top:0;width:24px;height:17px;border-right:1px solid #8a95a2"></div><div style="left:52px;top:0;width:39px;height:17px;background:linear-gradient(180deg,#e9a99d 0,#d9705e 45%,#c53b23 50%,#d8674a 100%)"></div><svg width="92" height="17" viewBox="0 0 92 17" style="left:-4px;top:-1px"><rect x="9.5" y="10.5" width="11" height="3" rx="1" fill="#fff" stroke="#4a5560"/><rect x="34.5" y="4.5" width="10" height="8" rx="1" fill="#fff" stroke="#4a5560"/><rect x="37.5" y="7.5" width="4" height="2.5" fill="none" stroke="#4a5560"/><path d="M67 4.5h3l2 2.5 2-2.5h3l-3.6 4.2 3.6 4.3h-3l-2-2.6-2 2.6h-3l3.6-4.3z" fill="#fff" stroke="#4a5560" stroke-width="1"/></svg></div>
<div style="left:444px;top:631px;width:679px;height:458px;background:#f0f0f0;border:1px solid;border-color:#6e6e6e #767676 #767676 #6e6e6e;border-width:1px 2px 2px 1px;box-shadow:inset 1px 1px 0 #fff;"></div>
<div class="f-s tc" style="left:447px;top:611px;width:336px;height:21px;background:#f0f0f0;border:1px solid #6e6e6e;border-bottom:none;border-radius:4px 4px 0 0;box-shadow:inset 1px 1px 0 #fff;font-size:15.6px;color:#1818b0;line-height:20px;">Page Setup</div>
<div style="left:444px;top:611px;width:6px;height:21px;background:#f0f0f0;border:1px solid #6e6e6e;border-right:none;border-bottom:none;border-radius:4px 0 0 0;box-shadow:inset 1px 1px 0 #fff;"></div>
<div class="f-s tc" style="left:783px;top:611px;width:340px;height:21px;background:#f0f0f0;border:1px solid #6e6e6e;border-bottom:none;border-radius:4px 4px 0 0;box-shadow:inset 1px 1px 0 #fff;font-size:14.7px;color:#1818b0;line-height:20px;">1 Angular Display</div>
<div style="left:441px;top:651px;width:672px;height:457px;background:#f0f0f0;border:1px solid;border-color:#6e6e6e #767676 #767676 #6e6e6e;border-width:1px 2px 2px 1px;box-shadow:inset 1px 1px 0 #fff;"></div>
<div class="f-s tc" style="left:441px;top:631px;width:333px;height:20px;background:#f0f0f0;border:1px solid #6e6e6e;border-bottom:none;border-radius:4px 4px 0 0;box-shadow:inset 1px 1px 0 #fff;font-size:14.7px;color:#1818b0;line-height:19px;padding-right:7px;border-radius:0 4px 0 0;">2 Angular Displays</div>
<div class="f-s tc" style="left:774px;top:631px;width:339px;height:22px;background:#f0f0f0;border:1px solid #6e6e6e;border-right-width:2px;border-bottom:none;border-radius:4px 4px 0 0;box-shadow:inset 1px 1px 0 #fff;font-size:15.6px;color:#0808b0;font-weight:bold;line-height:23px;white-space:pre;">4 Angular  Displays</div>
<div style="left:450px;top:678px;width:312px;height:180px;border:1px solid #d5d5d5;box-shadow:1px 1px 0 #fff, inset 1px 1px 0 #fff;border-color:#c4c4c4;"></div>
<div class="f-s tc" style="left:457px;top:666px;width:16px;height:25px;font-size:19px;color:#0000c8;line-height:25px;background:#f0f0f0;">1</div>
<div class="f-s tc" style="left:475px;top:692px;width:168px;height:39px;background:#c0ffff;border:1px solid;border-color:#7c7c7c #fff #fff #7c7c7c;font-size:32px;color:#0000c8;line-height:37px;"><span style="position:relative;top:-0.5px">24,4</span></div>
<div class="f-s tc" style="left:643px;top:692px;width:103px;height:39px;background:#ffdcc0;border:1px solid;border-color:#7c7c7c #fff #fff #7c7c7c;font-size:15px;color:#000;line-height:37px;"><span style="position:relative;top:-9px">DEGREE C</span></div>
<div style="left:474px;top:731px;width:276px;height:115px;border:1px solid #002810;background:#00ff80;overflow:hidden;"><div style="left:0;top:0;right:0;bottom:0;border:5px solid;border-color:#a4ecd0 #58a080 #58a080 #a4ecd0"></div><svg width="274" height="113" viewBox="0 0 274 113" style="left:0;top:0"><path d="M88.00 86.30A49.5 49.5 0 0 1 97.45 57.20" fill="none" stroke="#ffffb0" stroke-width="6"/><path d="M97.45 57.20A49.5 49.5 0 0 1 187.00 86.30" fill="none" stroke="#c81c0c" stroke-width="6"/><line x1="91.00" y1="86.30" x2="83.80" y2="86.30" stroke="#000" stroke-width="1"/><line x1="91.14" y1="82.65" x2="83.97" y2="82.09" stroke="#000" stroke-width="1"/><line x1="91.57" y1="79.03" x2="84.46" y2="77.90" stroke="#000" stroke-width="1"/><line x1="92.28" y1="75.44" x2="85.28" y2="73.76" stroke="#000" stroke-width="1"/><line x1="93.28" y1="71.93" x2="86.43" y2="69.71" stroke="#000" stroke-width="1"/><line x1="94.54" y1="68.51" x2="87.89" y2="65.75" stroke="#000" stroke-width="1"/><line x1="96.07" y1="65.19" x2="89.65" y2="61.92" stroke="#000" stroke-width="1"/><line x1="97.85" y1="62.00" x2="91.71" y2="58.24" stroke="#000" stroke-width="1"/><line x1="99.88" y1="58.97" x2="94.06" y2="54.74" stroke="#000" stroke-width="1"/><line x1="102.14" y1="56.10" x2="96.67" y2="51.42" stroke="#000" stroke-width="1"/><line x1="104.62" y1="53.42" x2="99.53" y2="48.33" stroke="#000" stroke-width="1"/><line x1="107.30" y1="50.94" x2="102.62" y2="45.47" stroke="#000" stroke-width="1"/><line x1="110.17" y1="48.68" x2="105.94" y2="42.86" stroke="#000" stroke-width="1"/><line x1="113.20" y1="46.65" x2="109.44" y2="40.51" stroke="#000" stroke-width="1"/><line x1="116.39" y1="44.87" x2="113.12" y2="38.45" stroke="#000" stroke-width="1"/><line x1="119.71" y1="43.34" x2="116.95" y2="36.69" stroke="#000" stroke-width="1"/><line x1="123.13" y1="42.08" x2="120.91" y2="35.23" stroke="#000" stroke-width="1"/><line x1="126.64" y1="41.08" x2="124.96" y2="34.08" stroke="#000" stroke-width="1"/><line x1="130.23" y1="40.37" x2="129.10" y2="33.26" stroke="#000" stroke-width="1"/><line x1="133.85" y1="39.94" x2="133.29" y2="32.77" stroke="#000" stroke-width="1"/><line x1="137.50" y1="39.80" x2="137.50" y2="32.60" stroke="#000" stroke-width="1"/><line x1="141.15" y1="39.94" x2="141.71" y2="32.77" stroke="#000" stroke-width="1"/><line x1="144.77" y1="40.37" x2="145.90" y2="33.26" stroke="#000" stroke-width="1"/><line x1="148.36" y1="41.08" x2="150.04" y2="34.08" stroke="#000" stroke-width="1"/><line x1="151.87" y1="42.08" x2="154.09" y2="35.23" stroke="#000" stroke-width="1"/><line x1="155.29" y1="43.34" x2="158.05" y2="36.69" stroke="#000" stroke-width="1"/><line x1="158.61" y1="44.87" x2="161.88" y2="38.45" stroke="#000" stroke-width="1"/><line x1="161.80" y1="46.65" x2="165.56" y2="40.51" stroke="#000" stroke-width="1"/><line x1="164.83" y1="48.68" x2="169.06" y2="42.86" stroke="#000" stroke-width="1"/><line x1="167.70" y1="50.94" x2="172.38" y2="45.47" stroke="#000" stroke-width="1"/><line x1="170.38" y1="53.42" x2="175.47" y2="48.33" stroke="#000" stroke-width="1"/><line x1="172.86" y1="56.10" x2="178.33" y2="51.42" stroke="#000" stroke-width="1"/><line x1="175.12" y1="58.97" x2="180.94" y2="54.74" stroke="#000" stroke-width="1"/><line x1="177.15" y1="62.00" x2="183.29" y2="58.24" stroke="#000" stroke-width="1"/><line x1="178.93" y1="65.19" x2="185.35" y2="61.92" stroke="#000" stroke-width="1"/><line x1="180.46" y1="68.51" x2="187.11" y2="65.75" stroke="#000" stroke-width="1"/><line x1="181.72" y1="71.93" x2="188.57" y2="69.71" stroke="#000" stroke-width="1"/><line x1="182.72" y1="75.44" x2="189.72" y2="73.76" stroke="#000" stroke-width="1"/><line x1="183.43" y1="79.03" x2="190.54" y2="77.90" stroke="#000" stroke-width="1"/><line x1="183.86" y1="82.65" x2="191.03" y2="82.09" stroke="#000" stroke-width="1"/><line x1="184.00" y1="86.30" x2="191.20" y2="86.30" stroke="#000" stroke-width="1"/><line x1="91.00" y1="86.30" x2="81.00" y2="86.30" stroke="#000" stroke-width="1.6"/><line x1="91.57" y1="79.03" x2="81.70" y2="77.46" stroke="#000" stroke-width="1.6"/><line x1="93.28" y1="71.93" x2="83.77" y2="68.84" stroke="#000" stroke-width="1.6"/><line x1="96.07" y1="65.19" x2="87.16" y2="60.65" stroke="#000" stroke-width="1.6"/><line x1="99.88" y1="58.97" x2="91.79" y2="53.09" stroke="#000" stroke-width="1.6"/><line x1="104.62" y1="53.42" x2="97.55" y2="46.35" stroke="#000" stroke-width="1.6"/><line x1="110.17" y1="48.68" x2="104.29" y2="40.59" stroke="#000" stroke-width="1.6"/><line x1="116.39" y1="44.87" x2="111.85" y2="35.96" stroke="#000" stroke-width="1.6"/><line x1="123.13" y1="42.08" x2="120.04" y2="32.57" stroke="#000" stroke-width="1.6"/><line x1="130.23" y1="40.37" x2="128.66" y2="30.50" stroke="#000" stroke-width="1.6"/><line x1="137.50" y1="39.80" x2="137.50" y2="29.80" stroke="#000" stroke-width="1.6"/><line x1="144.77" y1="40.37" x2="146.34" y2="30.50" stroke="#000" stroke-width="1.6"/><line x1="151.87" y1="42.08" x2="154.96" y2="32.57" stroke="#000" stroke-width="1.6"/><line x1="158.61" y1="44.87" x2="163.15" y2="35.96" stroke="#000" stroke-width="1.6"/><line x1="164.83" y1="48.68" x2="170.71" y2="40.59" stroke="#000" stroke-width="1.6"/><line x1="170.38" y1="53.42" x2="177.45" y2="46.35" stroke="#000" stroke-width="1.6"/><line x1="175.12" y1="58.97" x2="183.21" y2="53.09" stroke="#000" stroke-width="1.6"/><line x1="178.93" y1="65.19" x2="187.84" y2="60.65" stroke="#000" stroke-width="1.6"/><line x1="181.72" y1="71.93" x2="191.23" y2="68.84" stroke="#000" stroke-width="1.6"/><line x1="183.43" y1="79.03" x2="193.30" y2="77.46" stroke="#000" stroke-width="1.6"/><line x1="184.00" y1="86.30" x2="194.00" y2="86.30" stroke="#000" stroke-width="1.6"/><text x="69.0" y="91.1" font-family="'Liberation Serif',serif" font-size="14" fill="#0068c8" text-anchor="middle">0</text><text x="69.8" y="80.3" font-family="'Liberation Serif',serif" font-size="14" fill="#0068c8" text-anchor="middle">2</text><text x="72.4" y="69.9" font-family="'Liberation Serif',serif" font-size="14" fill="#0068c8" text-anchor="middle">4</text><text x="76.5" y="60.0" font-family="'Liberation Serif',serif" font-size="14" fill="#0068c8" text-anchor="middle">6</text><text x="82.1" y="50.8" font-family="'Liberation Serif',serif" font-size="14" fill="#0068c8" text-anchor="middle">8</text><text x="89.1" y="42.6" font-family="'Liberation Serif',serif" font-size="14" fill="#0068c8" text-anchor="middle">10</text><text x="97.2" y="35.6" font-family="'Liberation Serif',serif" font-size="14" fill="#0068c8" text-anchor="middle">12</text><text x="106.4" y="30.0" font-family="'Liberation Serif',serif" font-size="14" fill="#0068c8" text-anchor="middle">14</text><text x="116.3" y="25.9" font-family="'Liberation Serif',serif" font-size="14" fill="#0068c8" text-anchor="middle">16</text><text x="126.8" y="23.4" font-family="'Liberation Serif',serif" font-size="14" fill="#0068c8" text-anchor="middle">18</text><text x="137.5" y="22.6" font-family="'Liberation Serif',serif" font-size="14" fill="#0068c8" text-anchor="middle">20</text><text x="148.2" y="23.4" font-family="'Liberation Serif',serif" font-size="14" fill="#0068c8" text-anchor="middle">22</text><text x="158.7" y="25.9" font-family="'Liberation Serif',serif" font-size="14" fill="#0068c8" text-anchor="middle">24</text><text x="168.6" y="30.0" font-family="'Liberation Serif',serif" font-size="14" fill="#0068c8" text-anchor="middle">26</text><text x="177.8" y="35.6" font-family="'Liberation Serif',serif" font-size="14" fill="#0068c8" text-anchor="middle">28</text><text x="185.9" y="42.6" font-family="'Liberation Serif',serif" font-size="14" fill="#0068c8" text-anchor="middle">30</text><text x="192.9" y="50.8" font-family="'Liberation Serif',serif" font-size="14" fill="#0068c8" text-anchor="middle">32</text><text x="198.5" y="60.0" font-family="'Liberation Serif',serif" font-size="14" fill="#0068c8" text-anchor="middle">34</text><text x="202.6" y="69.9" font-family="'Liberation Serif',serif" font-size="14" fill="#0068c8" text-anchor="middle">36</text><text x="205.2" y="80.3" font-family="'Liberation Serif',serif" font-size="14" fill="#0068c8" text-anchor="middle">38</text><text x="206.0" y="91.1" font-family="'Liberation Serif',serif" font-size="14" fill="#0068c8" text-anchor="middle">40</text><path d="M152.74 43.96L134.40 85.18Q133.31 88.19 136.42 89.31Q139.52 90.43 140.60 87.42Z" fill="#004c8c"/></svg></div>
<div style="left:786px;top:686px;width:312px;height:172px;border:1px solid #d5d5d5;box-shadow:1px 1px 0 #fff, inset 1px 1px 0 #fff;border-color:#c4c4c4;"></div>
<div class="f-s tc" style="left:793px;top:674px;width:16px;height:25px;font-size:19px;color:#0000c8;line-height:25px;background:#f0f0f0;">2</div>
<div class="f-s tc" style="left:803px;top:700px;width:176px;height:39px;background:#c0ffff;border:1px solid;border-color:#7c7c7c #fff #fff #7c7c7c;font-size:32px;color:#0000c8;line-height:37px;"><span style="position:relative;top:-0.5px">23,2</span></div>
<div class="f-s tc" style="left:979px;top:700px;width:103px;height:39px;background:#ffdcc0;border:1px solid;border-color:#7c7c7c #fff #fff #7c7c7c;font-size:15px;color:#000;line-height:37px;"><span style="position:relative;top:-9px">DEGREE C</span></div>
<div style="left:802px;top:739px;width:283px;height:107px;border:1px solid #002810;background:#00ff80;overflow:hidden;"><div style="left:0;top:0;right:0;bottom:0;border:5px solid;border-color:#a4ecd0 #58a080 #58a080 #a4ecd0"></div><svg width="281" height="105" viewBox="0 0 281 105" style="left:0;top:0"><path d="M94.70 79.40A47 47 0 0 1 141.70 32.40" fill="none" stroke="#c81c0c" stroke-width="5.4"/><path d="M141.70 32.40A47 47 0 0 1 185.12 61.41" fill="none" stroke="#ffffb0" stroke-width="5.4"/><path d="M185.12 61.41A47 47 0 0 1 188.70 79.40" fill="none" stroke="#c81c0c" stroke-width="5.4"/><line x1="97.40" y1="79.40" x2="90.50" y2="79.40" stroke="#000" stroke-width="0.7"/><line x1="97.43" y1="77.66" x2="90.54" y2="77.39" stroke="#000" stroke-width="0.7"/><line x1="97.54" y1="75.92" x2="90.66" y2="75.38" stroke="#000" stroke-width="0.7"/><line x1="97.71" y1="74.19" x2="90.85" y2="73.38" stroke="#000" stroke-width="0.7"/><line x1="97.95" y1="72.47" x2="91.13" y2="71.39" stroke="#000" stroke-width="0.7"/><line x1="98.25" y1="70.76" x2="91.48" y2="69.41" stroke="#000" stroke-width="0.7"/><line x1="98.62" y1="69.06" x2="91.91" y2="67.45" stroke="#000" stroke-width="0.7"/><line x1="99.06" y1="67.38" x2="92.42" y2="65.50" stroke="#000" stroke-width="0.7"/><line x1="99.57" y1="65.71" x2="93.01" y2="63.58" stroke="#000" stroke-width="0.7"/><line x1="100.14" y1="64.07" x2="93.66" y2="61.68" stroke="#000" stroke-width="0.7"/><line x1="100.77" y1="62.45" x2="94.40" y2="59.81" stroke="#000" stroke-width="0.7"/><line x1="101.47" y1="60.85" x2="95.20" y2="57.96" stroke="#000" stroke-width="0.7"/><line x1="102.23" y1="59.29" x2="96.08" y2="56.16" stroke="#000" stroke-width="0.7"/><line x1="103.05" y1="57.75" x2="97.03" y2="54.38" stroke="#000" stroke-width="0.7"/><line x1="103.93" y1="56.25" x2="98.04" y2="52.65" stroke="#000" stroke-width="0.7"/><line x1="104.87" y1="54.79" x2="99.13" y2="50.95" stroke="#000" stroke-width="0.7"/><line x1="105.86" y1="53.36" x2="100.28" y2="49.31" stroke="#000" stroke-width="0.7"/><line x1="106.91" y1="51.97" x2="101.49" y2="47.70" stroke="#000" stroke-width="0.7"/><line x1="108.01" y1="50.63" x2="102.77" y2="46.15" stroke="#000" stroke-width="0.7"/><line x1="109.17" y1="49.33" x2="104.10" y2="44.65" stroke="#000" stroke-width="0.7"/><line x1="110.38" y1="48.08" x2="105.50" y2="43.20" stroke="#000" stroke-width="0.7"/><line x1="111.63" y1="46.87" x2="106.95" y2="41.80" stroke="#000" stroke-width="0.7"/><line x1="112.93" y1="45.71" x2="108.45" y2="40.47" stroke="#000" stroke-width="0.7"/><line x1="114.27" y1="44.61" x2="110.00" y2="39.19" stroke="#000" stroke-width="0.7"/><line x1="115.66" y1="43.56" x2="111.61" y2="37.98" stroke="#000" stroke-width="0.7"/><line x1="117.09" y1="42.57" x2="113.25" y2="36.83" stroke="#000" stroke-width="0.7"/><line x1="118.55" y1="41.63" x2="114.95" y2="35.74" stroke="#000" stroke-width="0.7"/><line x1="120.05" y1="40.75" x2="116.68" y2="34.73" stroke="#000" stroke-width="0.7"/><line x1="121.59" y1="39.93" x2="118.46" y2="33.78" stroke="#000" stroke-width="0.7"/><line x1="123.15" y1="39.17" x2="120.26" y2="32.90" stroke="#000" stroke-width="0.7"/><line x1="124.75" y1="38.47" x2="122.11" y2="32.10" stroke="#000" stroke-width="0.7"/><line x1="126.37" y1="37.84" x2="123.98" y2="31.36" stroke="#000" stroke-width="0.7"/><line x1="128.01" y1="37.27" x2="125.88" y2="30.71" stroke="#000" stroke-width="0.7"/><line x1="129.68" y1="36.76" x2="127.80" y2="30.12" stroke="#000" stroke-width="0.7"/><line x1="131.36" y1="36.32" x2="129.75" y2="29.61" stroke="#000" stroke-width="0.7"/><line x1="133.06" y1="35.95" x2="131.71" y2="29.18" stroke="#000" stroke-width="0.7"/><line x1="134.77" y1="35.65" x2="133.69" y2="28.83" stroke="#000" stroke-width="0.7"/><line x1="136.49" y1="35.41" x2="135.68" y2="28.55" stroke="#000" stroke-width="0.7"/><line x1="138.22" y1="35.24" x2="137.68" y2="28.36" stroke="#000" stroke-width="0.7"/><line x1="139.96" y1="35.13" x2="139.69" y2="28.24" stroke="#000" stroke-width="0.7"/><line x1="141.70" y1="35.10" x2="141.70" y2="28.20" stroke="#000" stroke-width="0.7"/><line x1="143.44" y1="35.13" x2="143.71" y2="28.24" stroke="#000" stroke-width="0.7"/><line x1="145.18" y1="35.24" x2="145.72" y2="28.36" stroke="#000" stroke-width="0.7"/><line x1="146.91" y1="35.41" x2="147.72" y2="28.55" stroke="#000" stroke-width="0.7"/><line x1="148.63" y1="35.65" x2="149.71" y2="28.83" stroke="#000" stroke-width="0.7"/><line x1="150.34" y1="35.95" x2="151.69" y2="29.18" stroke="#000" stroke-width="0.7"/><line x1="152.04" y1="36.32" x2="153.65" y2="29.61" stroke="#000" stroke-width="0.7"/><line x1="153.72" y1="36.76" x2="155.60" y2="30.12" stroke="#000" stroke-width="0.7"/><line x1="155.39" y1="37.27" x2="157.52" y2="30.71" stroke="#000" stroke-width="0.7"/><line x1="157.03" y1="37.84" x2="159.42" y2="31.36" stroke="#000" stroke-width="0.7"/><line x1="158.65" y1="38.47" x2="161.29" y2="32.10" stroke="#000" stroke-width="0.7"/><line x1="160.25" y1="39.17" x2="163.14" y2="32.90" stroke="#000" stroke-width="0.7"/><line x1="161.81" y1="39.93" x2="164.94" y2="33.78" stroke="#000" stroke-width="0.7"/><line x1="163.35" y1="40.75" x2="166.72" y2="34.73" stroke="#000" stroke-width="0.7"/><line x1="164.85" y1="41.63" x2="168.45" y2="35.74" stroke="#000" stroke-width="0.7"/><line x1="166.31" y1="42.57" x2="170.15" y2="36.83" stroke="#000" stroke-width="0.7"/><line x1="167.74" y1="43.56" x2="171.79" y2="37.98" stroke="#000" stroke-width="0.7"/><line x1="169.13" y1="44.61" x2="173.40" y2="39.19" stroke="#000" stroke-width="0.7"/><line x1="170.47" y1="45.71" x2="174.95" y2="40.47" stroke="#000" stroke-width="0.7"/><line x1="171.77" y1="46.87" x2="176.45" y2="41.80" stroke="#000" stroke-width="0.7"/><line x1="173.02" y1="48.08" x2="177.90" y2="43.20" stroke="#000" stroke-width="0.7"/><line x1="174.23" y1="49.33" x2="179.30" y2="44.65" stroke="#000" stroke-width="0.7"/><line x1="175.39" y1="50.63" x2="180.63" y2="46.15" stroke="#000" stroke-width="0.7"/><line x1="176.49" y1="51.97" x2="181.91" y2="47.70" stroke="#000" stroke-width="0.7"/><line x1="177.54" y1="53.36" x2="183.12" y2="49.31" stroke="#000" stroke-width="0.7"/><line x1="178.53" y1="54.79" x2="184.27" y2="50.95" stroke="#000" stroke-width="0.7"/><line x1="179.47" y1="56.25" x2="185.36" y2="52.65" stroke="#000" stroke-width="0.7"/><line x1="180.35" y1="57.75" x2="186.37" y2="54.38" stroke="#000" stroke-width="0.7"/><line x1="181.17" y1="59.29" x2="187.32" y2="56.16" stroke="#000" stroke-width="0.7"/><line x1="181.93" y1="60.85" x2="188.20" y2="57.96" stroke="#000" stroke-width="0.7"/><line x1="182.63" y1="62.45" x2="189.00" y2="59.81" stroke="#000" stroke-width="0.7"/><line x1="183.26" y1="64.07" x2="189.74" y2="61.68" stroke="#000" stroke-width="0.7"/><line x1="183.83" y1="65.71" x2="190.39" y2="63.58" stroke="#000" stroke-width="0.7"/><line x1="184.34" y1="67.38" x2="190.98" y2="65.50" stroke="#000" stroke-width="0.7"/><line x1="184.78" y1="69.06" x2="191.49" y2="67.45" stroke="#000" stroke-width="0.7"/><line x1="185.15" y1="70.76" x2="191.92" y2="69.41" stroke="#000" stroke-width="0.7"/><line x1="185.45" y1="72.47" x2="192.27" y2="71.39" stroke="#000" stroke-width="0.7"/><line x1="185.69" y1="74.19" x2="192.55" y2="73.38" stroke="#000" stroke-width="0.7"/><line x1="185.86" y1="75.92" x2="192.74" y2="75.38" stroke="#000" stroke-width="0.7"/><line x1="185.97" y1="77.66" x2="192.86" y2="77.39" stroke="#000" stroke-width="0.7"/><line x1="186.00" y1="79.40" x2="192.90" y2="79.40" stroke="#000" stroke-width="0.7"/><line x1="97.40" y1="79.40" x2="88.00" y2="79.40" stroke="#000" stroke-width="1.6"/><line x1="100.77" y1="62.45" x2="92.09" y2="58.85" stroke="#000" stroke-width="1.6"/><line x1="110.38" y1="48.08" x2="103.73" y2="41.43" stroke="#000" stroke-width="1.6"/><line x1="124.75" y1="38.47" x2="121.15" y2="29.79" stroke="#000" stroke-width="1.6"/><line x1="141.70" y1="35.10" x2="141.70" y2="25.70" stroke="#000" stroke-width="1.6"/><line x1="158.65" y1="38.47" x2="162.25" y2="29.79" stroke="#000" stroke-width="1.6"/><line x1="173.02" y1="48.08" x2="179.67" y2="41.43" stroke="#000" stroke-width="1.6"/><line x1="182.63" y1="62.45" x2="191.31" y2="58.85" stroke="#000" stroke-width="1.6"/><line x1="186.00" y1="79.40" x2="195.40" y2="79.40" stroke="#000" stroke-width="1.6"/><text x="78.7" y="83.5" font-family="'Liberation Sans',sans-serif" font-size="12" fill="#0068c8" text-anchor="middle">0</text><text x="97.2" y="38.9" font-family="'Liberation Sans',sans-serif" font-size="12" fill="#0068c8" text-anchor="middle">10</text><text x="141.7" y="20.5" font-family="'Liberation Sans',sans-serif" font-size="12" fill="#0068c8" text-anchor="middle">20</text><text x="186.2" y="38.9" font-family="'Liberation Sans',sans-serif" font-size="12" fill="#0068c8" text-anchor="middle">30</text><text x="204.7" y="83.5" font-family="'Liberation Sans',sans-serif" font-size="12" fill="#0068c8" text-anchor="middle">40</text><path d="M152.34 37.94L138.50 78.58Q137.71 81.68 140.90 82.50Q144.10 83.32 144.90 80.22Z" fill="#004c8c"/></svg></div>
<div style="left:450px;top:878px;width:312px;height:188px;border:1px solid #d5d5d5;box-shadow:1px 1px 0 #fff, inset 1px 1px 0 #fff;border-color:#c4c4c4;"></div>
<div class="f-s tc" style="left:457px;top:866px;width:16px;height:25px;font-size:19px;color:#0000c8;line-height:25px;background:#f0f0f0;">3</div>
<div class="f-s tc" style="left:475px;top:892px;width:168px;height:39px;background:#c0ffff;border:1px solid;border-color:#7c7c7c #fff #fff #7c7c7c;font-size:32px;color:#0000c8;line-height:37px;"><span style="position:relative;top:-0.5px">23,4</span></div>
<div class="f-s tc" style="left:643px;top:892px;width:103px;height:39px;background:#ffdcc0;border:1px solid;border-color:#7c7c7c #fff #fff #7c7c7c;font-size:15px;color:#000;line-height:37px;"><span style="position:relative;top:-9px">DEGREE C</span></div>
<div style="left:474px;top:931px;width:276px;height:115px;border:1px solid #002810;background:#00ff80;overflow:hidden;"><div style="left:0;top:0;right:0;bottom:0;border:5px solid;border-color:#a4ecd0 #58a080 #58a080 #a4ecd0"></div><svg width="274" height="113" viewBox="0 0 274 113" style="left:0;top:0"><path d="M87.40 86.00A49 49 0 0 1 87.54 82.31" fill="none" stroke="#c81c0c" stroke-width="6"/><path d="M87.54 82.31A49 49 0 0 1 176.04 57.20" fill="none" stroke="#ffffa0" stroke-width="6"/><path d="M176.04 57.20A49 49 0 0 1 185.40 86.00" fill="none" stroke="#c81c0c" stroke-width="6"/><line x1="90.40" y1="86.00" x2="82.90" y2="86.00" stroke="#000" stroke-width="1"/><line x1="90.76" y1="80.23" x2="83.32" y2="79.29" stroke="#000" stroke-width="1"/><line x1="91.85" y1="74.56" x2="84.58" y2="72.70" stroke="#000" stroke-width="1"/><line x1="93.63" y1="69.07" x2="86.66" y2="66.31" stroke="#000" stroke-width="1"/><line x1="96.09" y1="63.84" x2="89.52" y2="60.23" stroke="#000" stroke-width="1"/><line x1="99.19" y1="58.96" x2="93.12" y2="54.55" stroke="#000" stroke-width="1"/><line x1="102.87" y1="54.51" x2="97.40" y2="49.38" stroke="#000" stroke-width="1"/><line x1="107.08" y1="50.56" x2="102.30" y2="44.78" stroke="#000" stroke-width="1"/><line x1="111.75" y1="47.16" x2="107.73" y2="40.83" stroke="#000" stroke-width="1"/><line x1="116.81" y1="44.38" x2="113.62" y2="37.59" stroke="#000" stroke-width="1"/><line x1="122.19" y1="42.25" x2="119.87" y2="35.12" stroke="#000" stroke-width="1"/><line x1="127.78" y1="40.81" x2="126.38" y2="33.45" stroke="#000" stroke-width="1"/><line x1="133.51" y1="40.09" x2="133.04" y2="32.61" stroke="#000" stroke-width="1"/><line x1="139.29" y1="40.09" x2="139.76" y2="32.61" stroke="#000" stroke-width="1"/><line x1="145.02" y1="40.81" x2="146.42" y2="33.45" stroke="#000" stroke-width="1"/><line x1="150.61" y1="42.25" x2="152.93" y2="35.12" stroke="#000" stroke-width="1"/><line x1="155.99" y1="44.38" x2="159.18" y2="37.59" stroke="#000" stroke-width="1"/><line x1="161.05" y1="47.16" x2="165.07" y2="40.83" stroke="#000" stroke-width="1"/><line x1="165.72" y1="50.56" x2="170.50" y2="44.78" stroke="#000" stroke-width="1"/><line x1="169.93" y1="54.51" x2="175.40" y2="49.38" stroke="#000" stroke-width="1"/><line x1="173.61" y1="58.96" x2="179.68" y2="54.55" stroke="#000" stroke-width="1"/><line x1="176.71" y1="63.84" x2="183.28" y2="60.23" stroke="#000" stroke-width="1"/><line x1="179.17" y1="69.07" x2="186.14" y2="66.31" stroke="#000" stroke-width="1"/><line x1="180.95" y1="74.56" x2="188.22" y2="72.70" stroke="#000" stroke-width="1"/><line x1="182.04" y1="80.23" x2="189.48" y2="79.29" stroke="#000" stroke-width="1"/><line x1="182.40" y1="86.00" x2="189.90" y2="86.00" stroke="#000" stroke-width="1"/><line x1="90.40" y1="86.00" x2="80.40" y2="86.00" stroke="#000" stroke-width="1.6"/><line x1="99.19" y1="58.96" x2="91.10" y2="53.08" stroke="#000" stroke-width="1.6"/><line x1="122.19" y1="42.25" x2="119.10" y2="32.74" stroke="#000" stroke-width="1.6"/><line x1="150.61" y1="42.25" x2="153.70" y2="32.74" stroke="#000" stroke-width="1.6"/><line x1="173.61" y1="58.96" x2="181.70" y2="53.08" stroke="#000" stroke-width="1.6"/><line x1="182.40" y1="86.00" x2="192.40" y2="86.00" stroke="#000" stroke-width="1.6"/><text x="69.4" y="90.1" font-family="'Liberation Sans',sans-serif" font-size="12" fill="#0068c8" text-anchor="middle">0</text><text x="82.2" y="50.7" font-family="'Liberation Sans',sans-serif" font-size="12" fill="#0068c8" text-anchor="middle">10</text><text x="115.7" y="26.4" font-family="'Liberation Sans',sans-serif" font-size="12" fill="#0068c8" text-anchor="middle">20</text><text x="157.1" y="26.4" font-family="'Liberation Sans',sans-serif" font-size="12" fill="#0068c8" text-anchor="middle">30</text><text x="190.6" y="50.7" font-family="'Liberation Sans',sans-serif" font-size="12" fill="#0068c8" text-anchor="middle">40</text><text x="203.4" y="90.1" font-family="'Liberation Sans',sans-serif" font-size="12" fill="#0068c8" text-anchor="middle">50</text><path d="M131.93 41.72L133.12 86.33Q133.44 89.52 136.72 89.18Q140.00 88.85 139.68 85.67Z" fill="#004c8c"/></svg></div>
<div style="left:786px;top:878px;width:312px;height:188px;border:1px solid #d5d5d5;box-shadow:1px 1px 0 #fff, inset 1px 1px 0 #fff;border-color:#c4c4c4;"></div>
<div class="f-s tc" style="left:793px;top:866px;width:16px;height:25px;font-size:19px;color:#0000c8;line-height:25px;background:#f0f0f0;">4</div>
<div class="f-s tc" style="left:803px;top:892px;width:176px;height:39px;background:#c0ffff;border:1px solid;border-color:#7c7c7c #fff #fff #7c7c7c;font-size:32px;color:#0000c8;line-height:37px;"><span style="position:relative;top:-0.5px">21,5</span></div>
<div class="f-s tc" style="left:979px;top:892px;width:103px;height:39px;background:#ffdcc0;border:1px solid;border-color:#7c7c7c #fff #fff #7c7c7c;font-size:15px;color:#000;line-height:37px;"><span style="position:relative;top:-9px">DEGREE C</span></div>
<div style="left:802px;top:931px;width:283px;height:115px;border:1px solid #002810;background:#00ff80;overflow:hidden;"><div style="left:0;top:0;right:0;bottom:0;border:5px solid;border-color:#a4ecd0 #58a080 #58a080 #a4ecd0"></div><svg width="281" height="113" viewBox="0 0 281 113" style="left:0;top:0"><circle cx="140.7" cy="86.0" r="49.3" fill="none" stroke="#e81008" stroke-width="5"/><line x1="93.90" y1="86.00" x2="86.40" y2="86.00" stroke="#000" stroke-width="1"/><line x1="107.61" y1="52.91" x2="102.30" y2="47.60" stroke="#000" stroke-width="1"/><line x1="140.70" y1="39.20" x2="140.70" y2="31.70" stroke="#000" stroke-width="1"/><line x1="173.79" y1="52.91" x2="179.10" y2="47.60" stroke="#000" stroke-width="1"/><line x1="187.50" y1="86.00" x2="195.00" y2="86.00" stroke="#000" stroke-width="1"/><text x="71.7" y="90.1" font-family="'Liberation Sans',sans-serif" font-size="12" fill="#0068c8" text-anchor="middle">0</text><path d="M146.53 41.08L137.43 85.57Q137.02 88.75 140.29 89.17Q143.56 89.60 143.97 86.43Z" fill="#004c8c"/></svg></div>
<div class="f-s tc" style="left:1139px;top:627px;width:87px;height:23px;background:#ffffc0;border:2px solid;border-color:#9c9c9c #fff #fff #9c9c9c;font-size:18px;color:#000080;line-height:19px;"><span style="position:relative;top:0.5px">12-14-2009</span></div>
<div class="f-s tc" style="left:1139px;top:652px;width:87px;height:23px;background:#ffffc0;border:2px solid;border-color:#9c9c9c #fff #fff #9c9c9c;font-size:18px;color:#8c8c6c;line-height:19px;"><span style="position:relative;top:0.5px">11:17:09</span></div>
<div style="left:1139px;top:707px;width:91px;height:35px;background:#c8c8e8;border:2px solid;border-color:#8c8c8c #fff #fff #8c8c8c;"></div>
<div style="left:1143px;top:710.5px;width:83.5px;height:29.5px;background:#ffff80;border:1px solid #0000a0;"></div>
<div class="f-s tc" style="left:1142.7px;top:709.7px;width:12.79px;height:29.5px;font-size:17px;color:#000080;line-height:29.5px;">0</div>
<div style="left:1154.79px;top:710.5px;width:1px;height:29.5px;background:#0000a0;"></div>
<div class="f-s tc" style="left:1154.49px;top:709.7px;width:12.79px;height:29.5px;font-size:17px;color:#000080;line-height:29.5px;">0</div>
<div style="left:1166.57px;top:710.5px;width:1px;height:29.5px;background:#0000a0;"></div>
<div class="f-s tc" style="left:1166.27px;top:709.7px;width:12.79px;height:29.5px;font-size:17px;color:#000080;line-height:29.5px;">0</div>
<div style="left:1178.36px;top:710.5px;width:1px;height:29.5px;background:#0000a0;"></div>
<div class="f-s tc" style="left:1178.06px;top:709.7px;width:12.79px;height:29.5px;font-size:17px;color:#000080;line-height:29.5px;">0</div>
<div style="left:1190.14px;top:710.5px;width:1px;height:29.5px;background:#0000a0;"></div>
<div class="f-s tc" style="left:1189.84px;top:709.7px;width:12.79px;height:29.5px;font-size:17px;color:#000080;line-height:29.5px;">1</div>
<div style="left:1201.93px;top:710.5px;width:1px;height:29.5px;background:#0000a0;"></div>
<div class="f-s tc" style="left:1201.63px;top:709.7px;width:12.79px;height:29.5px;font-size:17px;color:#000080;line-height:29.5px;">3</div>
<div style="left:1213.71px;top:710.5px;width:1px;height:29.5px;background:#0000a0;"></div>
<div class="f-s tc" style="left:1213.41px;top:709.7px;width:12.79px;height:29.5px;font-size:17px;color:#000080;line-height:29.5px;">4</div>
<div class="f-s tc" style="left:1139px;top:795px;width:87px;height:23px;background:#f0f0f0;border:2px solid;border-color:#9c9c9c #fff #fff #9c9c9c;font-size:19px;color:#0000a8;line-height:19px;"><span style="position:relative;top:1px">Scan Rate</span></div>
<div class="f-s tc" style="left:1139px;top:820px;width:87px;height:23px;background:#ffffc0;border:2px solid;border-color:#9c9c9c #fff #fff #9c9c9c;font-size:19.5px;color:#0000a8;line-height:19px;letter-spacing:.5px;">2 sec</div>
<div class="f-s tc" style="left:1139px;top:884px;width:88px;height:32px;background:#80ff80;border-style:solid;border-width:1px;border-color:#fff #696969 #696969 #fff;box-shadow:inset -1px -1px 0 #a0a0a0;font-size:18px;color:#000;line-height:30px;"><span style="position:relative;top:-0.7px">RUN</span></div>
<div style="left:1139px;top:969px;width:12px;height:12px;background:#fff;border:2px solid;border-color:#7c7c7c #f6f6f6 #f6f6f6 #7c7c7c;"><svg width="8" height="8" viewBox="0 0 8 8" style="left:0;top:0"><path d="M.8 3.6l2.2 2.4 4-4.6" fill="none" stroke="#000" stroke-width="1.9"/></svg></div>
<div class="f-s tl" style="left:1156.5px;top:965px;width:79.5px;height:19px;font-size:13px;color:#1414a8;line-height:19px;">Alarm Sound</div>
<div class="f-s tc" style="left:1146px;top:995px;width:65px;height:25px;font-size:14.5px;color:#fff;line-height:25px;background:#ff0000;line-height:20px;">High !!!</div>
<div class="f-s tc" style="left:1130px;top:1035px;width:97px;height:33px;background:#ffc0c0;border-style:solid;border-width:1px;border-color:#fff #696969 #696969 #fff;box-shadow:inset -1px -1px 0 #a0a0a0;font-size:15px;color:#000;line-height:31px;"><span style="position:relative;top:-0.7px">Save Data</span></div>
<div class="f-s tc" style="left:467px;top:1131.5px;width:136px;height:32px;background:#ffffc0;border-style:solid;border-width:1px;border-color:#fff #696969 #696969 #fff;box-shadow:inset -1px -1px 0 #a0a0a0;font-size:15px;color:#000;line-height:30px;"><span style="position:relative;top:0.4px">Chart Display</span></div>
<div class="f-s tc" style="left:642px;top:1131px;width:137px;height:33px;background:#ffff80;border:1px solid #000;box-shadow:inset 1px 1px 0 #fff,inset -1px -1px 0 #696969,inset -2px -2px 0 #a0a0a0;font-size:15px;line-height:31px;">Text Display<div style="left:4px;top:4px;right:4px;bottom:4px;border:1px dotted #000"></div></div>
<div class="f-s tc" style="left:1002px;top:1131.5px;width:113px;height:32px;background:#c0ffc0;border-style:solid;border-width:1px;border-color:#fff #696969 #696969 #fff;box-shadow:inset -1px -1px 0 #a0a0a0;font-size:22px;color:#000;line-height:30px;">Exit</div>
</body></html>
